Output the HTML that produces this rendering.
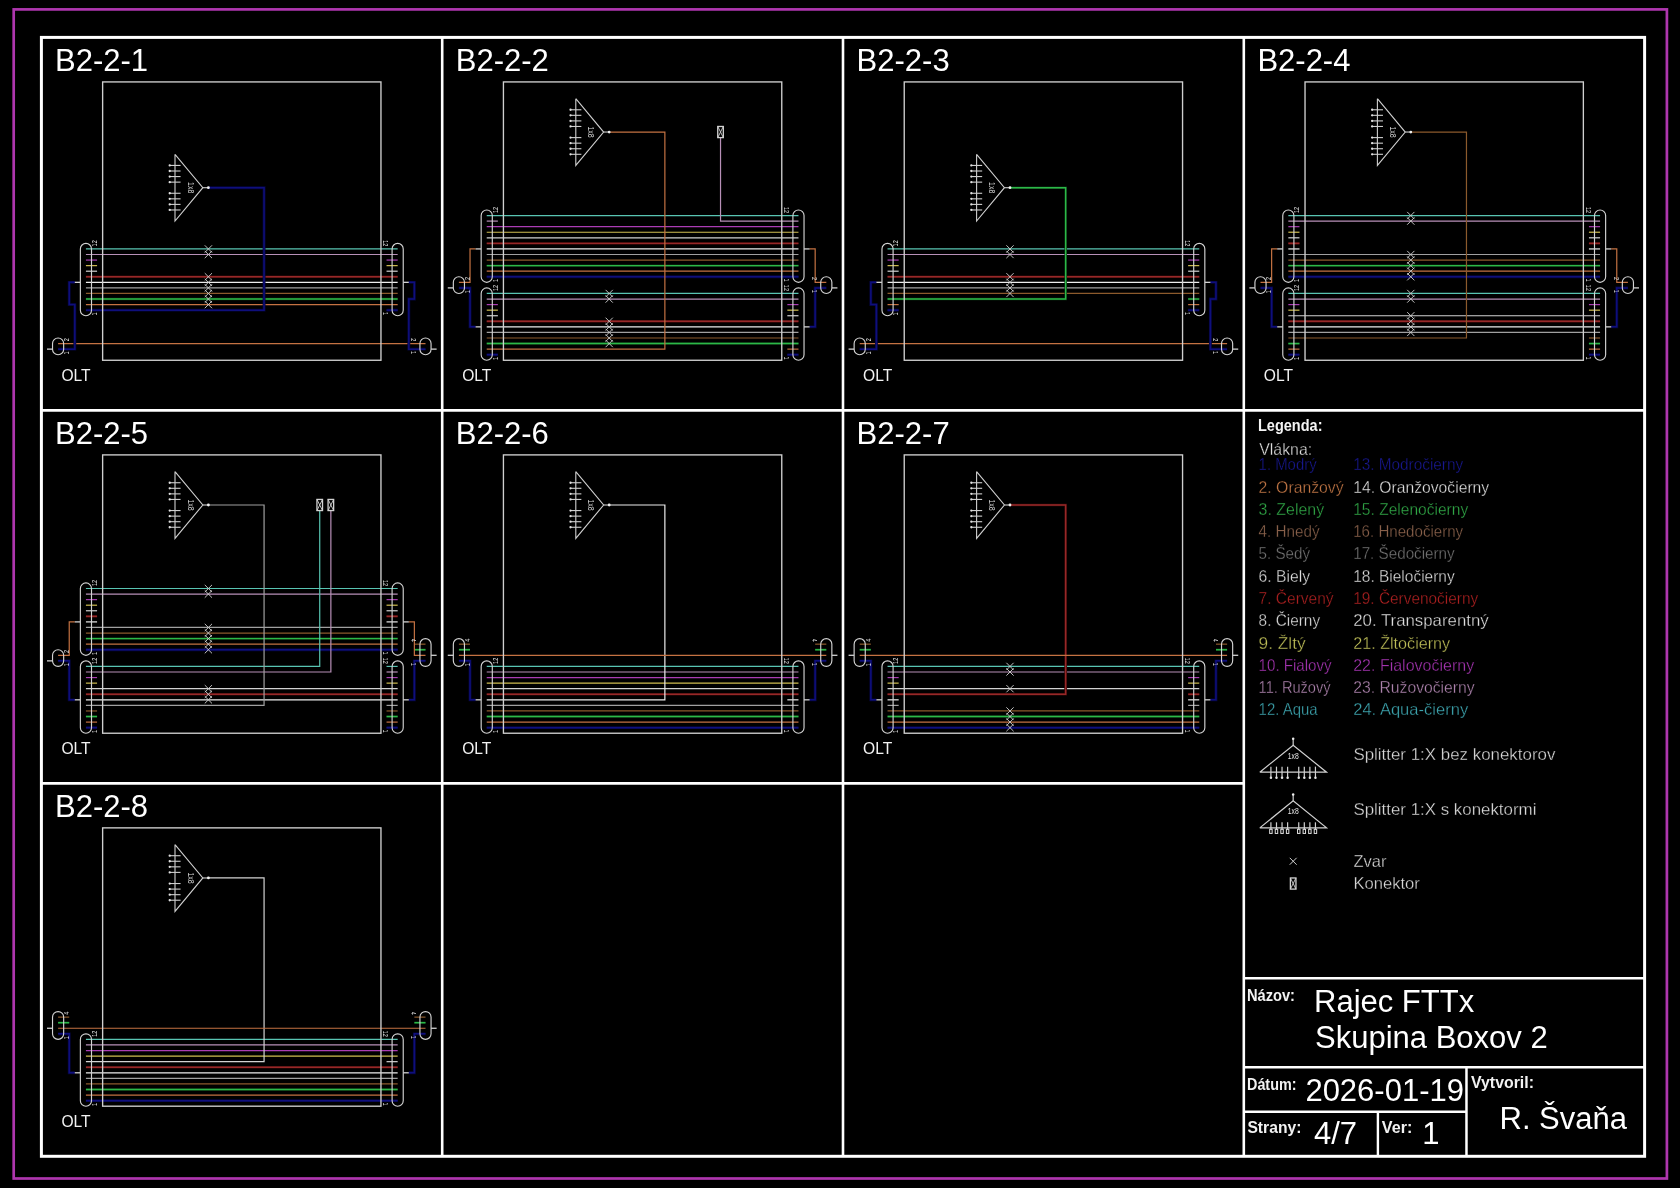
<!DOCTYPE html>
<html lang="sk"><head><meta charset="utf-8"><title>Rajec FTTx - Skupina Boxov 2</title>
<style>
html,body{margin:0;padding:0;background:#000;}
body{width:1680px;height:1188px;overflow:hidden;}
svg{display:block;will-change:transform;}
text{font-family:"Liberation Sans",sans-serif;}
.t{font-size:31px;fill:#fff;}
.o{font-size:15.6px;fill:#f2f2f2;}
.v{font-size:31px;fill:#fff;}
.k{font-size:16.9px;fill:#f2f2f2;font-weight:bold;}
.l{font-size:16.5px;stroke:#000;stroke-width:0.3px;}
.lb{font-size:16.8px;font-weight:bold;}
.n{font-family:"Liberation Sans",sans-serif;}
</style></head><body>
<svg width="1680" height="1188" viewBox="0 0 1680 1188">
<rect width="1680" height="1188" fill="#000"/>
<g>
<polyline points="175,154.3 175,221.1 202.83,187.7 175,154.3" stroke="#cfcfcf" stroke-width="1.1" fill="none" stroke-linejoin="miter"/>
<line x1="202.83" y1="187.7" x2="208.4" y2="187.7" stroke="#cfcfcf" stroke-width="1.1"/>
<line x1="169.43" y1="182.13" x2="180.57" y2="182.13" stroke="#cfcfcf" stroke-width="1.1"/>
<circle cx="169.71" cy="182.13" r="1.15" fill="#e0e0e0"/>
<line x1="169.43" y1="193.27" x2="180.57" y2="193.27" stroke="#cfcfcf" stroke-width="1.1"/>
<circle cx="169.71" cy="193.27" r="1.15" fill="#e0e0e0"/>
<line x1="169.43" y1="176.57" x2="180.57" y2="176.57" stroke="#cfcfcf" stroke-width="1.1"/>
<circle cx="169.71" cy="176.57" r="1.15" fill="#e0e0e0"/>
<line x1="169.43" y1="198.83" x2="180.57" y2="198.83" stroke="#cfcfcf" stroke-width="1.1"/>
<circle cx="169.71" cy="198.83" r="1.15" fill="#e0e0e0"/>
<line x1="169.43" y1="171" x2="180.57" y2="171" stroke="#cfcfcf" stroke-width="1.1"/>
<circle cx="169.71" cy="171" r="1.15" fill="#e0e0e0"/>
<line x1="169.43" y1="204.4" x2="180.57" y2="204.4" stroke="#cfcfcf" stroke-width="1.1"/>
<circle cx="169.71" cy="204.4" r="1.15" fill="#e0e0e0"/>
<line x1="169.43" y1="165.43" x2="180.57" y2="165.43" stroke="#cfcfcf" stroke-width="1.1"/>
<circle cx="169.71" cy="165.43" r="1.15" fill="#e0e0e0"/>
<line x1="169.43" y1="209.97" x2="180.57" y2="209.97" stroke="#cfcfcf" stroke-width="1.1"/>
<circle cx="169.71" cy="209.97" r="1.15" fill="#e0e0e0"/>
<text transform="translate(187.69 187.7) rotate(90) scale(0.77 1)" font-size="9" fill="#dcdcdc" text-anchor="middle">1x8</text>
<line x1="85.93" y1="271.2" x2="97.07" y2="271.2" stroke="#d2d2d2" stroke-width="1.2"/>
<line x1="85.93" y1="265.63" x2="97.07" y2="265.63" stroke="#d0be50" stroke-width="1.2"/>
<line x1="85.93" y1="260.07" x2="97.07" y2="260.07" stroke="#aa3cb4" stroke-width="1.2"/>
<line x1="386.53" y1="310.17" x2="397.67" y2="310.17" stroke="#05053c" stroke-width="2.9"/>
<line x1="386.53" y1="310.17" x2="397.67" y2="310.17" stroke="#0f0f7c" stroke-width="1.5"/>
<line x1="386.53" y1="271.2" x2="397.67" y2="271.2" stroke="#d2d2d2" stroke-width="1.2"/>
<line x1="386.53" y1="265.63" x2="397.67" y2="265.63" stroke="#d0be50" stroke-width="1.2"/>
<line x1="386.53" y1="260.07" x2="397.67" y2="260.07" stroke="#aa3cb4" stroke-width="1.2"/>
<line x1="85.93" y1="248.93" x2="397.67" y2="248.93" stroke="#58c4b2" stroke-width="1.2"/>
<line x1="85.93" y1="254.5" x2="397.67" y2="254.5" stroke="#b890b8" stroke-width="1.2"/>
<line x1="85.93" y1="276.77" x2="397.67" y2="276.77" stroke="#380808" stroke-width="2.7"/>
<line x1="85.93" y1="276.77" x2="397.67" y2="276.77" stroke="#962828" stroke-width="1.45"/>
<line x1="85.93" y1="282.33" x2="397.67" y2="282.33" stroke="#ececec" stroke-width="1.2"/>
<line x1="85.93" y1="287.9" x2="397.67" y2="287.9" stroke="#a0a0a0" stroke-width="1.2"/>
<line x1="85.93" y1="293.47" x2="397.67" y2="293.47" stroke="#8c5a2c" stroke-width="1.2"/>
<line x1="85.93" y1="299.03" x2="397.67" y2="299.03" stroke="#0a3512" stroke-width="2.5"/>
<line x1="85.93" y1="299.03" x2="397.67" y2="299.03" stroke="#2cb848" stroke-width="1.4"/>
<line x1="85.93" y1="304.6" x2="397.67" y2="304.6" stroke="#c47242" stroke-width="1.2"/>
<polyline points="85.93,310.17 264.07,310.17 264.07,187.7 208.4,187.7" stroke="#05053c" stroke-width="2.9" fill="none"/>
<polyline points="85.93,310.17 264.07,310.17 264.07,187.7 208.4,187.7" stroke="#0f0f7c" stroke-width="1.5" fill="none"/>
<polyline points="58.1,343.57 425.5,343.57" stroke="#c47242" stroke-width="1.2" fill="none"/>
<polyline points="58.1,349.13 74.8,349.13 74.8,304.6 69.23,304.6 69.23,282.33 74.8,282.33" stroke="#05053c" stroke-width="2.9" fill="none"/>
<polyline points="58.1,349.13 74.8,349.13 74.8,304.6 69.23,304.6 69.23,282.33 74.8,282.33" stroke="#0f0f7c" stroke-width="1.5" fill="none"/>
<polyline points="425.5,349.13 408.8,349.13 408.8,299.03 414.37,299.03 414.37,282.33 408.8,282.33" stroke="#05053c" stroke-width="2.9" fill="none"/>
<polyline points="425.5,349.13 408.8,349.13 408.8,299.03 414.37,299.03 414.37,282.33 408.8,282.33" stroke="#0f0f7c" stroke-width="1.5" fill="none"/>
<rect x="102.63" y="81.93" width="278.33" height="278.33" stroke="#d0d0d0" stroke-width="1.35" fill="none"/>
<line x1="204.78" y1="245.31" x2="212.02" y2="252.55" stroke="#cacaca" stroke-width="0.95"/>
<line x1="204.78" y1="252.55" x2="212.02" y2="245.31" stroke="#cacaca" stroke-width="0.95"/>
<line x1="204.78" y1="250.88" x2="212.02" y2="258.12" stroke="#cacaca" stroke-width="0.95"/>
<line x1="204.78" y1="258.12" x2="212.02" y2="250.88" stroke="#cacaca" stroke-width="0.95"/>
<line x1="204.78" y1="273.15" x2="212.02" y2="280.38" stroke="#cacaca" stroke-width="0.95"/>
<line x1="204.78" y1="280.38" x2="212.02" y2="273.15" stroke="#cacaca" stroke-width="0.95"/>
<line x1="204.78" y1="278.71" x2="212.02" y2="285.95" stroke="#cacaca" stroke-width="0.95"/>
<line x1="204.78" y1="285.95" x2="212.02" y2="278.71" stroke="#cacaca" stroke-width="0.95"/>
<line x1="204.78" y1="284.28" x2="212.02" y2="291.52" stroke="#cacaca" stroke-width="0.95"/>
<line x1="204.78" y1="291.52" x2="212.02" y2="284.28" stroke="#cacaca" stroke-width="0.95"/>
<line x1="204.78" y1="289.85" x2="212.02" y2="297.08" stroke="#cacaca" stroke-width="0.95"/>
<line x1="204.78" y1="297.08" x2="212.02" y2="289.85" stroke="#cacaca" stroke-width="0.95"/>
<line x1="204.78" y1="295.41" x2="212.02" y2="302.65" stroke="#cacaca" stroke-width="0.95"/>
<line x1="204.78" y1="302.65" x2="212.02" y2="295.41" stroke="#cacaca" stroke-width="0.95"/>
<line x1="204.78" y1="300.98" x2="212.02" y2="308.22" stroke="#cacaca" stroke-width="0.95"/>
<line x1="204.78" y1="308.22" x2="212.02" y2="300.98" stroke="#cacaca" stroke-width="0.95"/>
<rect x="80.37" y="243.37" width="11.13" height="72.37" rx="5.57" ry="5.57" stroke="#d2d2d2" stroke-width="1.15" fill="none"/>
<line x1="74.8" y1="282.33" x2="80.37" y2="282.33" stroke="#d2d2d2" stroke-width="1.3"/>
<text transform="translate(96.79 243.37) rotate(-90) scale(0.74 1)" font-size="7.4" fill="#f4f4f4" text-anchor="middle">12</text>
<text transform="translate(96.79 313.95) rotate(-90) scale(0.74 1)" font-size="7.4" fill="#f4f4f4" text-anchor="middle">1</text>
<rect x="392.1" y="243.37" width="11.13" height="72.37" rx="5.57" ry="5.57" stroke="#d2d2d2" stroke-width="1.15" fill="none"/>
<line x1="403.23" y1="282.33" x2="408.8" y2="282.33" stroke="#d2d2d2" stroke-width="1.3"/>
<text transform="translate(383.47 243.37) rotate(90) scale(0.74 1)" font-size="7.4" fill="#f4f4f4" text-anchor="middle">12</text>
<text transform="translate(383.47 313.51) rotate(90) scale(0.74 1)" font-size="7.4" fill="#f4f4f4" text-anchor="middle">1</text>
<rect x="52.53" y="338" width="11.13" height="16.7" rx="5.57" ry="5.57" stroke="#d2d2d2" stroke-width="1.15" fill="none"/>
<line x1="46.97" y1="349.13" x2="52.53" y2="349.13" stroke="#d2d2d2" stroke-width="1.3"/>
<text transform="translate(68.95 339.67) rotate(-90) scale(0.74 1)" font-size="7.4" fill="#f4f4f4" text-anchor="middle">2</text>
<text transform="translate(68.95 352.92) rotate(-90) scale(0.74 1)" font-size="7.4" fill="#f4f4f4" text-anchor="middle">1</text>
<rect x="419.93" y="338" width="11.13" height="16.7" rx="5.57" ry="5.57" stroke="#d2d2d2" stroke-width="1.15" fill="none"/>
<line x1="431.07" y1="349.13" x2="436.63" y2="349.13" stroke="#d2d2d2" stroke-width="1.3"/>
<text transform="translate(411.3 339.67) rotate(90) scale(0.74 1)" font-size="7.4" fill="#f4f4f4" text-anchor="middle">2</text>
<text transform="translate(411.3 352.47) rotate(90) scale(0.74 1)" font-size="7.4" fill="#f4f4f4" text-anchor="middle">1</text>
<circle cx="208.4" cy="187.7" r="1.4" fill="#f0f0f0"/>
<text x="55" y="70.8" class="t">B2-2-1</text>
<text x="61.4" y="381.1" class="o">OLT</text>
</g>
<g>
<polyline points="575.8,98.63 575.8,165.43 603.63,132.03 575.8,98.63" stroke="#cfcfcf" stroke-width="1.1" fill="none" stroke-linejoin="miter"/>
<line x1="603.63" y1="132.03" x2="609.2" y2="132.03" stroke="#cfcfcf" stroke-width="1.1"/>
<line x1="570.23" y1="126.47" x2="581.37" y2="126.47" stroke="#cfcfcf" stroke-width="1.1"/>
<circle cx="570.51" cy="126.47" r="1.15" fill="#e0e0e0"/>
<line x1="570.23" y1="137.6" x2="581.37" y2="137.6" stroke="#cfcfcf" stroke-width="1.1"/>
<circle cx="570.51" cy="137.6" r="1.15" fill="#e0e0e0"/>
<line x1="570.23" y1="120.9" x2="581.37" y2="120.9" stroke="#cfcfcf" stroke-width="1.1"/>
<circle cx="570.51" cy="120.9" r="1.15" fill="#e0e0e0"/>
<line x1="570.23" y1="143.17" x2="581.37" y2="143.17" stroke="#cfcfcf" stroke-width="1.1"/>
<circle cx="570.51" cy="143.17" r="1.15" fill="#e0e0e0"/>
<line x1="570.23" y1="115.33" x2="581.37" y2="115.33" stroke="#cfcfcf" stroke-width="1.1"/>
<circle cx="570.51" cy="115.33" r="1.15" fill="#e0e0e0"/>
<line x1="570.23" y1="148.73" x2="581.37" y2="148.73" stroke="#cfcfcf" stroke-width="1.1"/>
<circle cx="570.51" cy="148.73" r="1.15" fill="#e0e0e0"/>
<line x1="570.23" y1="109.77" x2="581.37" y2="109.77" stroke="#cfcfcf" stroke-width="1.1"/>
<circle cx="570.51" cy="109.77" r="1.15" fill="#e0e0e0"/>
<line x1="570.23" y1="154.3" x2="581.37" y2="154.3" stroke="#cfcfcf" stroke-width="1.1"/>
<circle cx="570.51" cy="154.3" r="1.15" fill="#e0e0e0"/>
<text transform="translate(588.49 132.03) rotate(90) scale(0.77 1)" font-size="9" fill="#dcdcdc" text-anchor="middle">1x8</text>
<line x1="486.73" y1="221.1" x2="497.87" y2="221.1" stroke="#b890b8" stroke-width="1.2"/>
<line x1="486.73" y1="354.7" x2="497.87" y2="354.7" stroke="#05053c" stroke-width="2.9"/>
<line x1="486.73" y1="354.7" x2="497.87" y2="354.7" stroke="#0f0f7c" stroke-width="1.5"/>
<line x1="486.73" y1="315.73" x2="497.87" y2="315.73" stroke="#d2d2d2" stroke-width="1.2"/>
<line x1="486.73" y1="310.17" x2="497.87" y2="310.17" stroke="#d0be50" stroke-width="1.2"/>
<line x1="486.73" y1="304.6" x2="497.87" y2="304.6" stroke="#aa3cb4" stroke-width="1.2"/>
<line x1="787.33" y1="354.7" x2="798.47" y2="354.7" stroke="#05053c" stroke-width="2.9"/>
<line x1="787.33" y1="354.7" x2="798.47" y2="354.7" stroke="#0f0f7c" stroke-width="1.5"/>
<line x1="787.33" y1="349.13" x2="798.47" y2="349.13" stroke="#c47242" stroke-width="1.2"/>
<line x1="787.33" y1="315.73" x2="798.47" y2="315.73" stroke="#d2d2d2" stroke-width="1.2"/>
<line x1="787.33" y1="310.17" x2="798.47" y2="310.17" stroke="#d0be50" stroke-width="1.2"/>
<line x1="787.33" y1="304.6" x2="798.47" y2="304.6" stroke="#aa3cb4" stroke-width="1.2"/>
<line x1="486.73" y1="215.53" x2="798.47" y2="215.53" stroke="#58c4b2" stroke-width="1.2"/>
<line x1="486.73" y1="226.67" x2="798.47" y2="226.67" stroke="#aa3cb4" stroke-width="1.2"/>
<line x1="486.73" y1="232.23" x2="798.47" y2="232.23" stroke="#d0be50" stroke-width="1.2"/>
<line x1="486.73" y1="237.8" x2="798.47" y2="237.8" stroke="#d2d2d2" stroke-width="1.2"/>
<line x1="486.73" y1="243.37" x2="798.47" y2="243.37" stroke="#380808" stroke-width="2.7"/>
<line x1="486.73" y1="243.37" x2="798.47" y2="243.37" stroke="#962828" stroke-width="1.45"/>
<line x1="486.73" y1="248.93" x2="798.47" y2="248.93" stroke="#ececec" stroke-width="1.2"/>
<line x1="486.73" y1="254.5" x2="798.47" y2="254.5" stroke="#a0a0a0" stroke-width="1.2"/>
<line x1="486.73" y1="260.07" x2="798.47" y2="260.07" stroke="#8c5a2c" stroke-width="1.2"/>
<line x1="486.73" y1="265.63" x2="798.47" y2="265.63" stroke="#0a3512" stroke-width="2.5"/>
<line x1="486.73" y1="265.63" x2="798.47" y2="265.63" stroke="#2cb848" stroke-width="1.4"/>
<line x1="486.73" y1="271.2" x2="798.47" y2="271.2" stroke="#c47242" stroke-width="1.2"/>
<line x1="486.73" y1="276.77" x2="798.47" y2="276.77" stroke="#05053c" stroke-width="2.9"/>
<line x1="486.73" y1="276.77" x2="798.47" y2="276.77" stroke="#0f0f7c" stroke-width="1.5"/>
<polyline points="798.47,221.1 720.53,221.1 720.53,137.6" stroke="#b890b8" stroke-width="1.2" fill="none"/>
<line x1="486.73" y1="293.47" x2="798.47" y2="293.47" stroke="#58c4b2" stroke-width="1.2"/>
<line x1="486.73" y1="299.03" x2="798.47" y2="299.03" stroke="#b890b8" stroke-width="1.2"/>
<line x1="486.73" y1="321.3" x2="798.47" y2="321.3" stroke="#380808" stroke-width="2.7"/>
<line x1="486.73" y1="321.3" x2="798.47" y2="321.3" stroke="#962828" stroke-width="1.45"/>
<line x1="486.73" y1="326.87" x2="798.47" y2="326.87" stroke="#ececec" stroke-width="1.2"/>
<line x1="486.73" y1="332.43" x2="798.47" y2="332.43" stroke="#a0a0a0" stroke-width="1.2"/>
<line x1="486.73" y1="338" x2="798.47" y2="338" stroke="#8c5a2c" stroke-width="1.2"/>
<line x1="486.73" y1="343.57" x2="798.47" y2="343.57" stroke="#0a3512" stroke-width="2.5"/>
<line x1="486.73" y1="343.57" x2="798.47" y2="343.57" stroke="#2cb848" stroke-width="1.4"/>
<polyline points="486.73,349.13 664.87,349.13 664.87,132.03 609.2,132.03" stroke="#c47242" stroke-width="1.2" fill="none"/>
<polyline points="458.9,282.33 470.03,282.33 470.03,248.93 475.6,248.93" stroke="#c47242" stroke-width="1.2" fill="none"/>
<polyline points="458.9,287.9 470.03,287.9 470.03,326.87 475.6,326.87" stroke="#05053c" stroke-width="2.9" fill="none"/>
<polyline points="458.9,287.9 470.03,287.9 470.03,326.87 475.6,326.87" stroke="#0f0f7c" stroke-width="1.5" fill="none"/>
<polyline points="826.3,282.33 815.17,282.33 815.17,248.93 809.6,248.93" stroke="#c47242" stroke-width="1.2" fill="none"/>
<polyline points="826.3,287.9 815.17,287.9 815.17,326.87 809.6,326.87" stroke="#05053c" stroke-width="2.9" fill="none"/>
<polyline points="826.3,287.9 815.17,287.9 815.17,326.87 809.6,326.87" stroke="#0f0f7c" stroke-width="1.5" fill="none"/>
<rect x="503.43" y="81.93" width="278.33" height="278.33" stroke="#d0d0d0" stroke-width="1.35" fill="none"/>
<line x1="605.58" y1="289.85" x2="612.82" y2="297.08" stroke="#cacaca" stroke-width="0.95"/>
<line x1="605.58" y1="297.08" x2="612.82" y2="289.85" stroke="#cacaca" stroke-width="0.95"/>
<line x1="605.58" y1="295.41" x2="612.82" y2="302.65" stroke="#cacaca" stroke-width="0.95"/>
<line x1="605.58" y1="302.65" x2="612.82" y2="295.41" stroke="#cacaca" stroke-width="0.95"/>
<line x1="605.58" y1="317.68" x2="612.82" y2="324.92" stroke="#cacaca" stroke-width="0.95"/>
<line x1="605.58" y1="324.92" x2="612.82" y2="317.68" stroke="#cacaca" stroke-width="0.95"/>
<line x1="605.58" y1="323.25" x2="612.82" y2="330.48" stroke="#cacaca" stroke-width="0.95"/>
<line x1="605.58" y1="330.48" x2="612.82" y2="323.25" stroke="#cacaca" stroke-width="0.95"/>
<line x1="605.58" y1="328.81" x2="612.82" y2="336.05" stroke="#cacaca" stroke-width="0.95"/>
<line x1="605.58" y1="336.05" x2="612.82" y2="328.81" stroke="#cacaca" stroke-width="0.95"/>
<line x1="605.58" y1="334.38" x2="612.82" y2="341.62" stroke="#cacaca" stroke-width="0.95"/>
<line x1="605.58" y1="341.62" x2="612.82" y2="334.38" stroke="#cacaca" stroke-width="0.95"/>
<line x1="605.58" y1="339.95" x2="612.82" y2="347.18" stroke="#cacaca" stroke-width="0.95"/>
<line x1="605.58" y1="347.18" x2="612.82" y2="339.95" stroke="#cacaca" stroke-width="0.95"/>
<rect x="717.75" y="126.47" width="5.57" height="11.13" stroke="#d2d2d2" stroke-width="1.3" fill="none"/>
<line x1="717.75" y1="126.47" x2="723.32" y2="137.6" stroke="#d2d2d2" stroke-width="0.9"/>
<line x1="717.75" y1="137.6" x2="723.32" y2="126.47" stroke="#d2d2d2" stroke-width="0.9"/>
<rect x="481.17" y="209.97" width="11.13" height="72.37" rx="5.57" ry="5.57" stroke="#d2d2d2" stroke-width="1.15" fill="none"/>
<line x1="475.6" y1="248.93" x2="481.17" y2="248.93" stroke="#d2d2d2" stroke-width="1.3"/>
<text transform="translate(497.59 209.97) rotate(-90) scale(0.74 1)" font-size="7.4" fill="#f4f4f4" text-anchor="middle">12</text>
<text transform="translate(497.59 280.55) rotate(-90) scale(0.74 1)" font-size="7.4" fill="#f4f4f4" text-anchor="middle">1</text>
<rect x="792.9" y="209.97" width="11.13" height="72.37" rx="5.57" ry="5.57" stroke="#d2d2d2" stroke-width="1.15" fill="none"/>
<line x1="804.03" y1="248.93" x2="809.6" y2="248.93" stroke="#d2d2d2" stroke-width="1.3"/>
<text transform="translate(784.27 209.97) rotate(90) scale(0.74 1)" font-size="7.4" fill="#f4f4f4" text-anchor="middle">12</text>
<text transform="translate(784.27 280.11) rotate(90) scale(0.74 1)" font-size="7.4" fill="#f4f4f4" text-anchor="middle">1</text>
<rect x="481.17" y="287.9" width="11.13" height="72.37" rx="5.57" ry="5.57" stroke="#d2d2d2" stroke-width="1.15" fill="none"/>
<line x1="475.6" y1="326.87" x2="481.17" y2="326.87" stroke="#d2d2d2" stroke-width="1.3"/>
<text transform="translate(497.59 287.9) rotate(-90) scale(0.74 1)" font-size="7.4" fill="#f4f4f4" text-anchor="middle">12</text>
<text transform="translate(497.59 358.49) rotate(-90) scale(0.74 1)" font-size="7.4" fill="#f4f4f4" text-anchor="middle">1</text>
<rect x="792.9" y="287.9" width="11.13" height="72.37" rx="5.57" ry="5.57" stroke="#d2d2d2" stroke-width="1.15" fill="none"/>
<line x1="804.03" y1="326.87" x2="809.6" y2="326.87" stroke="#d2d2d2" stroke-width="1.3"/>
<text transform="translate(784.27 287.9) rotate(90) scale(0.74 1)" font-size="7.4" fill="#f4f4f4" text-anchor="middle">12</text>
<text transform="translate(784.27 358.04) rotate(90) scale(0.74 1)" font-size="7.4" fill="#f4f4f4" text-anchor="middle">1</text>
<rect x="453.33" y="276.77" width="11.13" height="16.7" rx="5.57" ry="5.57" stroke="#d2d2d2" stroke-width="1.15" fill="none"/>
<line x1="447.77" y1="287.9" x2="453.33" y2="287.9" stroke="#d2d2d2" stroke-width="1.3"/>
<text transform="translate(469.75 278.44) rotate(-90) scale(0.74 1)" font-size="7.4" fill="#f4f4f4" text-anchor="middle">2</text>
<text transform="translate(469.75 291.69) rotate(-90) scale(0.74 1)" font-size="7.4" fill="#f4f4f4" text-anchor="middle">1</text>
<rect x="820.73" y="276.77" width="11.13" height="16.7" rx="5.57" ry="5.57" stroke="#d2d2d2" stroke-width="1.15" fill="none"/>
<line x1="831.87" y1="287.9" x2="837.43" y2="287.9" stroke="#d2d2d2" stroke-width="1.3"/>
<text transform="translate(812.1 278.44) rotate(90) scale(0.74 1)" font-size="7.4" fill="#f4f4f4" text-anchor="middle">2</text>
<text transform="translate(812.1 291.24) rotate(90) scale(0.74 1)" font-size="7.4" fill="#f4f4f4" text-anchor="middle">1</text>
<circle cx="609.2" cy="132.03" r="1.4" fill="#f0f0f0"/>
<text x="455.8" y="70.8" class="t">B2-2-2</text>
<text x="462.2" y="381.1" class="o">OLT</text>
</g>
<g>
<polyline points="976.6,154.3 976.6,221.1 1004.43,187.7 976.6,154.3" stroke="#cfcfcf" stroke-width="1.1" fill="none" stroke-linejoin="miter"/>
<line x1="1004.43" y1="187.7" x2="1010" y2="187.7" stroke="#cfcfcf" stroke-width="1.1"/>
<line x1="971.03" y1="182.13" x2="982.17" y2="182.13" stroke="#cfcfcf" stroke-width="1.1"/>
<circle cx="971.31" cy="182.13" r="1.15" fill="#e0e0e0"/>
<line x1="971.03" y1="193.27" x2="982.17" y2="193.27" stroke="#cfcfcf" stroke-width="1.1"/>
<circle cx="971.31" cy="193.27" r="1.15" fill="#e0e0e0"/>
<line x1="971.03" y1="176.57" x2="982.17" y2="176.57" stroke="#cfcfcf" stroke-width="1.1"/>
<circle cx="971.31" cy="176.57" r="1.15" fill="#e0e0e0"/>
<line x1="971.03" y1="198.83" x2="982.17" y2="198.83" stroke="#cfcfcf" stroke-width="1.1"/>
<circle cx="971.31" cy="198.83" r="1.15" fill="#e0e0e0"/>
<line x1="971.03" y1="171" x2="982.17" y2="171" stroke="#cfcfcf" stroke-width="1.1"/>
<circle cx="971.31" cy="171" r="1.15" fill="#e0e0e0"/>
<line x1="971.03" y1="204.4" x2="982.17" y2="204.4" stroke="#cfcfcf" stroke-width="1.1"/>
<circle cx="971.31" cy="204.4" r="1.15" fill="#e0e0e0"/>
<line x1="971.03" y1="165.43" x2="982.17" y2="165.43" stroke="#cfcfcf" stroke-width="1.1"/>
<circle cx="971.31" cy="165.43" r="1.15" fill="#e0e0e0"/>
<line x1="971.03" y1="209.97" x2="982.17" y2="209.97" stroke="#cfcfcf" stroke-width="1.1"/>
<circle cx="971.31" cy="209.97" r="1.15" fill="#e0e0e0"/>
<text transform="translate(989.29 187.7) rotate(90) scale(0.77 1)" font-size="9" fill="#dcdcdc" text-anchor="middle">1x8</text>
<line x1="887.53" y1="310.17" x2="898.67" y2="310.17" stroke="#05053c" stroke-width="2.9"/>
<line x1="887.53" y1="310.17" x2="898.67" y2="310.17" stroke="#0f0f7c" stroke-width="1.5"/>
<line x1="887.53" y1="304.6" x2="898.67" y2="304.6" stroke="#c47242" stroke-width="1.2"/>
<line x1="887.53" y1="271.2" x2="898.67" y2="271.2" stroke="#d2d2d2" stroke-width="1.2"/>
<line x1="887.53" y1="265.63" x2="898.67" y2="265.63" stroke="#d0be50" stroke-width="1.2"/>
<line x1="887.53" y1="260.07" x2="898.67" y2="260.07" stroke="#aa3cb4" stroke-width="1.2"/>
<line x1="1188.13" y1="310.17" x2="1199.27" y2="310.17" stroke="#05053c" stroke-width="2.9"/>
<line x1="1188.13" y1="310.17" x2="1199.27" y2="310.17" stroke="#0f0f7c" stroke-width="1.5"/>
<line x1="1188.13" y1="304.6" x2="1199.27" y2="304.6" stroke="#c47242" stroke-width="1.2"/>
<line x1="1188.13" y1="299.03" x2="1199.27" y2="299.03" stroke="#0a3512" stroke-width="2.5"/>
<line x1="1188.13" y1="299.03" x2="1199.27" y2="299.03" stroke="#2cb848" stroke-width="1.4"/>
<line x1="1188.13" y1="271.2" x2="1199.27" y2="271.2" stroke="#d2d2d2" stroke-width="1.2"/>
<line x1="1188.13" y1="265.63" x2="1199.27" y2="265.63" stroke="#d0be50" stroke-width="1.2"/>
<line x1="1188.13" y1="260.07" x2="1199.27" y2="260.07" stroke="#aa3cb4" stroke-width="1.2"/>
<line x1="887.53" y1="248.93" x2="1199.27" y2="248.93" stroke="#58c4b2" stroke-width="1.2"/>
<line x1="887.53" y1="254.5" x2="1199.27" y2="254.5" stroke="#b890b8" stroke-width="1.2"/>
<line x1="887.53" y1="276.77" x2="1199.27" y2="276.77" stroke="#380808" stroke-width="2.7"/>
<line x1="887.53" y1="276.77" x2="1199.27" y2="276.77" stroke="#962828" stroke-width="1.45"/>
<line x1="887.53" y1="282.33" x2="1199.27" y2="282.33" stroke="#ececec" stroke-width="1.2"/>
<line x1="887.53" y1="287.9" x2="1199.27" y2="287.9" stroke="#a0a0a0" stroke-width="1.2"/>
<line x1="887.53" y1="293.47" x2="1199.27" y2="293.47" stroke="#8c5a2c" stroke-width="1.2"/>
<polyline points="887.53,299.03 1065.67,299.03 1065.67,187.7 1010,187.7" stroke="#0a3512" stroke-width="2.5" fill="none"/>
<polyline points="887.53,299.03 1065.67,299.03 1065.67,187.7 1010,187.7" stroke="#2cb848" stroke-width="1.4" fill="none"/>
<polyline points="859.7,343.57 1227.1,343.57" stroke="#c47242" stroke-width="1.2" fill="none"/>
<polyline points="859.7,349.13 876.4,349.13 876.4,304.6 870.83,304.6 870.83,282.33 876.4,282.33" stroke="#05053c" stroke-width="2.9" fill="none"/>
<polyline points="859.7,349.13 876.4,349.13 876.4,304.6 870.83,304.6 870.83,282.33 876.4,282.33" stroke="#0f0f7c" stroke-width="1.5" fill="none"/>
<polyline points="1227.1,349.13 1210.4,349.13 1210.4,299.03 1215.97,299.03 1215.97,282.33 1210.4,282.33" stroke="#05053c" stroke-width="2.9" fill="none"/>
<polyline points="1227.1,349.13 1210.4,349.13 1210.4,299.03 1215.97,299.03 1215.97,282.33 1210.4,282.33" stroke="#0f0f7c" stroke-width="1.5" fill="none"/>
<rect x="904.23" y="81.93" width="278.33" height="278.33" stroke="#d0d0d0" stroke-width="1.35" fill="none"/>
<line x1="1006.38" y1="245.31" x2="1013.62" y2="252.55" stroke="#cacaca" stroke-width="0.95"/>
<line x1="1006.38" y1="252.55" x2="1013.62" y2="245.31" stroke="#cacaca" stroke-width="0.95"/>
<line x1="1006.38" y1="250.88" x2="1013.62" y2="258.12" stroke="#cacaca" stroke-width="0.95"/>
<line x1="1006.38" y1="258.12" x2="1013.62" y2="250.88" stroke="#cacaca" stroke-width="0.95"/>
<line x1="1006.38" y1="273.15" x2="1013.62" y2="280.38" stroke="#cacaca" stroke-width="0.95"/>
<line x1="1006.38" y1="280.38" x2="1013.62" y2="273.15" stroke="#cacaca" stroke-width="0.95"/>
<line x1="1006.38" y1="278.71" x2="1013.62" y2="285.95" stroke="#cacaca" stroke-width="0.95"/>
<line x1="1006.38" y1="285.95" x2="1013.62" y2="278.71" stroke="#cacaca" stroke-width="0.95"/>
<line x1="1006.38" y1="284.28" x2="1013.62" y2="291.52" stroke="#cacaca" stroke-width="0.95"/>
<line x1="1006.38" y1="291.52" x2="1013.62" y2="284.28" stroke="#cacaca" stroke-width="0.95"/>
<line x1="1006.38" y1="289.85" x2="1013.62" y2="297.08" stroke="#cacaca" stroke-width="0.95"/>
<line x1="1006.38" y1="297.08" x2="1013.62" y2="289.85" stroke="#cacaca" stroke-width="0.95"/>
<rect x="881.97" y="243.37" width="11.13" height="72.37" rx="5.57" ry="5.57" stroke="#d2d2d2" stroke-width="1.15" fill="none"/>
<line x1="876.4" y1="282.33" x2="881.97" y2="282.33" stroke="#d2d2d2" stroke-width="1.3"/>
<text transform="translate(898.39 243.37) rotate(-90) scale(0.74 1)" font-size="7.4" fill="#f4f4f4" text-anchor="middle">12</text>
<text transform="translate(898.39 313.95) rotate(-90) scale(0.74 1)" font-size="7.4" fill="#f4f4f4" text-anchor="middle">1</text>
<rect x="1193.7" y="243.37" width="11.13" height="72.37" rx="5.57" ry="5.57" stroke="#d2d2d2" stroke-width="1.15" fill="none"/>
<line x1="1204.83" y1="282.33" x2="1210.4" y2="282.33" stroke="#d2d2d2" stroke-width="1.3"/>
<text transform="translate(1185.07 243.37) rotate(90) scale(0.74 1)" font-size="7.4" fill="#f4f4f4" text-anchor="middle">12</text>
<text transform="translate(1185.07 313.51) rotate(90) scale(0.74 1)" font-size="7.4" fill="#f4f4f4" text-anchor="middle">1</text>
<rect x="854.13" y="338" width="11.13" height="16.7" rx="5.57" ry="5.57" stroke="#d2d2d2" stroke-width="1.15" fill="none"/>
<line x1="848.57" y1="349.13" x2="854.13" y2="349.13" stroke="#d2d2d2" stroke-width="1.3"/>
<text transform="translate(870.55 339.67) rotate(-90) scale(0.74 1)" font-size="7.4" fill="#f4f4f4" text-anchor="middle">2</text>
<text transform="translate(870.55 352.92) rotate(-90) scale(0.74 1)" font-size="7.4" fill="#f4f4f4" text-anchor="middle">1</text>
<rect x="1221.53" y="338" width="11.13" height="16.7" rx="5.57" ry="5.57" stroke="#d2d2d2" stroke-width="1.15" fill="none"/>
<line x1="1232.67" y1="349.13" x2="1238.23" y2="349.13" stroke="#d2d2d2" stroke-width="1.3"/>
<text transform="translate(1212.9 339.67) rotate(90) scale(0.74 1)" font-size="7.4" fill="#f4f4f4" text-anchor="middle">2</text>
<text transform="translate(1212.9 352.47) rotate(90) scale(0.74 1)" font-size="7.4" fill="#f4f4f4" text-anchor="middle">1</text>
<circle cx="1010" cy="187.7" r="1.4" fill="#f0f0f0"/>
<text x="856.6" y="70.8" class="t">B2-2-3</text>
<text x="863" y="381.1" class="o">OLT</text>
</g>
<g>
<polyline points="1377.4,98.63 1377.4,165.43 1405.23,132.03 1377.4,98.63" stroke="#cfcfcf" stroke-width="1.1" fill="none" stroke-linejoin="miter"/>
<line x1="1405.23" y1="132.03" x2="1410.8" y2="132.03" stroke="#cfcfcf" stroke-width="1.1"/>
<line x1="1371.83" y1="126.47" x2="1382.97" y2="126.47" stroke="#cfcfcf" stroke-width="1.1"/>
<circle cx="1372.11" cy="126.47" r="1.15" fill="#e0e0e0"/>
<line x1="1371.83" y1="137.6" x2="1382.97" y2="137.6" stroke="#cfcfcf" stroke-width="1.1"/>
<circle cx="1372.11" cy="137.6" r="1.15" fill="#e0e0e0"/>
<line x1="1371.83" y1="120.9" x2="1382.97" y2="120.9" stroke="#cfcfcf" stroke-width="1.1"/>
<circle cx="1372.11" cy="120.9" r="1.15" fill="#e0e0e0"/>
<line x1="1371.83" y1="143.17" x2="1382.97" y2="143.17" stroke="#cfcfcf" stroke-width="1.1"/>
<circle cx="1372.11" cy="143.17" r="1.15" fill="#e0e0e0"/>
<line x1="1371.83" y1="115.33" x2="1382.97" y2="115.33" stroke="#cfcfcf" stroke-width="1.1"/>
<circle cx="1372.11" cy="115.33" r="1.15" fill="#e0e0e0"/>
<line x1="1371.83" y1="148.73" x2="1382.97" y2="148.73" stroke="#cfcfcf" stroke-width="1.1"/>
<circle cx="1372.11" cy="148.73" r="1.15" fill="#e0e0e0"/>
<line x1="1371.83" y1="109.77" x2="1382.97" y2="109.77" stroke="#cfcfcf" stroke-width="1.1"/>
<circle cx="1372.11" cy="109.77" r="1.15" fill="#e0e0e0"/>
<line x1="1371.83" y1="154.3" x2="1382.97" y2="154.3" stroke="#cfcfcf" stroke-width="1.1"/>
<circle cx="1372.11" cy="154.3" r="1.15" fill="#e0e0e0"/>
<text transform="translate(1390.09 132.03) rotate(90) scale(0.77 1)" font-size="9" fill="#dcdcdc" text-anchor="middle">1x8</text>
<line x1="1288.33" y1="248.93" x2="1299.47" y2="248.93" stroke="#ececec" stroke-width="1.2"/>
<line x1="1288.33" y1="243.37" x2="1299.47" y2="243.37" stroke="#380808" stroke-width="2.7"/>
<line x1="1288.33" y1="243.37" x2="1299.47" y2="243.37" stroke="#962828" stroke-width="1.45"/>
<line x1="1288.33" y1="237.8" x2="1299.47" y2="237.8" stroke="#d2d2d2" stroke-width="1.2"/>
<line x1="1288.33" y1="232.23" x2="1299.47" y2="232.23" stroke="#d0be50" stroke-width="1.2"/>
<line x1="1288.33" y1="226.67" x2="1299.47" y2="226.67" stroke="#aa3cb4" stroke-width="1.2"/>
<line x1="1588.93" y1="248.93" x2="1600.07" y2="248.93" stroke="#ececec" stroke-width="1.2"/>
<line x1="1588.93" y1="243.37" x2="1600.07" y2="243.37" stroke="#380808" stroke-width="2.7"/>
<line x1="1588.93" y1="243.37" x2="1600.07" y2="243.37" stroke="#962828" stroke-width="1.45"/>
<line x1="1588.93" y1="237.8" x2="1600.07" y2="237.8" stroke="#d2d2d2" stroke-width="1.2"/>
<line x1="1588.93" y1="232.23" x2="1600.07" y2="232.23" stroke="#d0be50" stroke-width="1.2"/>
<line x1="1588.93" y1="226.67" x2="1600.07" y2="226.67" stroke="#aa3cb4" stroke-width="1.2"/>
<line x1="1288.33" y1="354.7" x2="1299.47" y2="354.7" stroke="#05053c" stroke-width="2.9"/>
<line x1="1288.33" y1="354.7" x2="1299.47" y2="354.7" stroke="#0f0f7c" stroke-width="1.5"/>
<line x1="1288.33" y1="349.13" x2="1299.47" y2="349.13" stroke="#c47242" stroke-width="1.2"/>
<line x1="1288.33" y1="343.57" x2="1299.47" y2="343.57" stroke="#0a3512" stroke-width="2.5"/>
<line x1="1288.33" y1="343.57" x2="1299.47" y2="343.57" stroke="#2cb848" stroke-width="1.4"/>
<line x1="1288.33" y1="310.17" x2="1299.47" y2="310.17" stroke="#d0be50" stroke-width="1.2"/>
<line x1="1288.33" y1="304.6" x2="1299.47" y2="304.6" stroke="#aa3cb4" stroke-width="1.2"/>
<line x1="1588.93" y1="354.7" x2="1600.07" y2="354.7" stroke="#05053c" stroke-width="2.9"/>
<line x1="1588.93" y1="354.7" x2="1600.07" y2="354.7" stroke="#0f0f7c" stroke-width="1.5"/>
<line x1="1588.93" y1="349.13" x2="1600.07" y2="349.13" stroke="#c47242" stroke-width="1.2"/>
<line x1="1588.93" y1="343.57" x2="1600.07" y2="343.57" stroke="#0a3512" stroke-width="2.5"/>
<line x1="1588.93" y1="343.57" x2="1600.07" y2="343.57" stroke="#2cb848" stroke-width="1.4"/>
<line x1="1588.93" y1="338" x2="1600.07" y2="338" stroke="#8c5a2c" stroke-width="1.2"/>
<line x1="1588.93" y1="310.17" x2="1600.07" y2="310.17" stroke="#d0be50" stroke-width="1.2"/>
<line x1="1588.93" y1="304.6" x2="1600.07" y2="304.6" stroke="#aa3cb4" stroke-width="1.2"/>
<line x1="1288.33" y1="215.53" x2="1600.07" y2="215.53" stroke="#58c4b2" stroke-width="1.2"/>
<line x1="1288.33" y1="221.1" x2="1600.07" y2="221.1" stroke="#b890b8" stroke-width="1.2"/>
<line x1="1288.33" y1="254.5" x2="1600.07" y2="254.5" stroke="#a0a0a0" stroke-width="1.2"/>
<line x1="1288.33" y1="260.07" x2="1600.07" y2="260.07" stroke="#8c5a2c" stroke-width="1.2"/>
<line x1="1288.33" y1="265.63" x2="1600.07" y2="265.63" stroke="#0a3512" stroke-width="2.5"/>
<line x1="1288.33" y1="265.63" x2="1600.07" y2="265.63" stroke="#2cb848" stroke-width="1.4"/>
<line x1="1288.33" y1="271.2" x2="1600.07" y2="271.2" stroke="#c47242" stroke-width="1.2"/>
<line x1="1288.33" y1="276.77" x2="1600.07" y2="276.77" stroke="#05053c" stroke-width="2.9"/>
<line x1="1288.33" y1="276.77" x2="1600.07" y2="276.77" stroke="#0f0f7c" stroke-width="1.5"/>
<line x1="1288.33" y1="293.47" x2="1600.07" y2="293.47" stroke="#58c4b2" stroke-width="1.2"/>
<line x1="1288.33" y1="299.03" x2="1600.07" y2="299.03" stroke="#b890b8" stroke-width="1.2"/>
<line x1="1288.33" y1="315.73" x2="1600.07" y2="315.73" stroke="#d2d2d2" stroke-width="1.2"/>
<line x1="1288.33" y1="321.3" x2="1600.07" y2="321.3" stroke="#380808" stroke-width="2.7"/>
<line x1="1288.33" y1="321.3" x2="1600.07" y2="321.3" stroke="#962828" stroke-width="1.45"/>
<line x1="1288.33" y1="326.87" x2="1600.07" y2="326.87" stroke="#ececec" stroke-width="1.2"/>
<line x1="1288.33" y1="332.43" x2="1600.07" y2="332.43" stroke="#a0a0a0" stroke-width="1.2"/>
<polyline points="1288.33,338 1466.47,338 1466.47,132.03 1410.8,132.03" stroke="#8c5a2c" stroke-width="1.2" fill="none"/>
<polyline points="1260.5,282.33 1271.63,282.33 1271.63,248.93 1277.2,248.93" stroke="#c47242" stroke-width="1.2" fill="none"/>
<polyline points="1260.5,287.9 1271.63,287.9 1271.63,326.87 1277.2,326.87" stroke="#05053c" stroke-width="2.9" fill="none"/>
<polyline points="1260.5,287.9 1271.63,287.9 1271.63,326.87 1277.2,326.87" stroke="#0f0f7c" stroke-width="1.5" fill="none"/>
<polyline points="1627.9,282.33 1616.77,282.33 1616.77,248.93 1611.2,248.93" stroke="#c47242" stroke-width="1.2" fill="none"/>
<polyline points="1627.9,287.9 1616.77,287.9 1616.77,326.87 1611.2,326.87" stroke="#05053c" stroke-width="2.9" fill="none"/>
<polyline points="1627.9,287.9 1616.77,287.9 1616.77,326.87 1611.2,326.87" stroke="#0f0f7c" stroke-width="1.5" fill="none"/>
<rect x="1305.03" y="81.93" width="278.33" height="278.33" stroke="#d0d0d0" stroke-width="1.35" fill="none"/>
<line x1="1407.18" y1="211.91" x2="1414.42" y2="219.15" stroke="#cacaca" stroke-width="0.95"/>
<line x1="1407.18" y1="219.15" x2="1414.42" y2="211.91" stroke="#cacaca" stroke-width="0.95"/>
<line x1="1407.18" y1="217.48" x2="1414.42" y2="224.72" stroke="#cacaca" stroke-width="0.95"/>
<line x1="1407.18" y1="224.72" x2="1414.42" y2="217.48" stroke="#cacaca" stroke-width="0.95"/>
<line x1="1407.18" y1="250.88" x2="1414.42" y2="258.12" stroke="#cacaca" stroke-width="0.95"/>
<line x1="1407.18" y1="258.12" x2="1414.42" y2="250.88" stroke="#cacaca" stroke-width="0.95"/>
<line x1="1407.18" y1="256.45" x2="1414.42" y2="263.69" stroke="#cacaca" stroke-width="0.95"/>
<line x1="1407.18" y1="263.69" x2="1414.42" y2="256.45" stroke="#cacaca" stroke-width="0.95"/>
<line x1="1407.18" y1="262.01" x2="1414.42" y2="269.25" stroke="#cacaca" stroke-width="0.95"/>
<line x1="1407.18" y1="269.25" x2="1414.42" y2="262.01" stroke="#cacaca" stroke-width="0.95"/>
<line x1="1407.18" y1="267.58" x2="1414.42" y2="274.82" stroke="#cacaca" stroke-width="0.95"/>
<line x1="1407.18" y1="274.82" x2="1414.42" y2="267.58" stroke="#cacaca" stroke-width="0.95"/>
<line x1="1407.18" y1="273.15" x2="1414.42" y2="280.38" stroke="#cacaca" stroke-width="0.95"/>
<line x1="1407.18" y1="280.38" x2="1414.42" y2="273.15" stroke="#cacaca" stroke-width="0.95"/>
<line x1="1407.18" y1="289.85" x2="1414.42" y2="297.08" stroke="#cacaca" stroke-width="0.95"/>
<line x1="1407.18" y1="297.08" x2="1414.42" y2="289.85" stroke="#cacaca" stroke-width="0.95"/>
<line x1="1407.18" y1="295.41" x2="1414.42" y2="302.65" stroke="#cacaca" stroke-width="0.95"/>
<line x1="1407.18" y1="302.65" x2="1414.42" y2="295.41" stroke="#cacaca" stroke-width="0.95"/>
<line x1="1407.18" y1="312.11" x2="1414.42" y2="319.35" stroke="#cacaca" stroke-width="0.95"/>
<line x1="1407.18" y1="319.35" x2="1414.42" y2="312.11" stroke="#cacaca" stroke-width="0.95"/>
<line x1="1407.18" y1="317.68" x2="1414.42" y2="324.92" stroke="#cacaca" stroke-width="0.95"/>
<line x1="1407.18" y1="324.92" x2="1414.42" y2="317.68" stroke="#cacaca" stroke-width="0.95"/>
<line x1="1407.18" y1="323.25" x2="1414.42" y2="330.48" stroke="#cacaca" stroke-width="0.95"/>
<line x1="1407.18" y1="330.48" x2="1414.42" y2="323.25" stroke="#cacaca" stroke-width="0.95"/>
<line x1="1407.18" y1="328.81" x2="1414.42" y2="336.05" stroke="#cacaca" stroke-width="0.95"/>
<line x1="1407.18" y1="336.05" x2="1414.42" y2="328.81" stroke="#cacaca" stroke-width="0.95"/>
<rect x="1282.77" y="209.97" width="11.13" height="72.37" rx="5.57" ry="5.57" stroke="#d2d2d2" stroke-width="1.15" fill="none"/>
<line x1="1277.2" y1="248.93" x2="1282.77" y2="248.93" stroke="#d2d2d2" stroke-width="1.3"/>
<text transform="translate(1299.19 209.97) rotate(-90) scale(0.74 1)" font-size="7.4" fill="#f4f4f4" text-anchor="middle">12</text>
<text transform="translate(1299.19 280.55) rotate(-90) scale(0.74 1)" font-size="7.4" fill="#f4f4f4" text-anchor="middle">1</text>
<rect x="1594.5" y="209.97" width="11.13" height="72.37" rx="5.57" ry="5.57" stroke="#d2d2d2" stroke-width="1.15" fill="none"/>
<line x1="1605.63" y1="248.93" x2="1611.2" y2="248.93" stroke="#d2d2d2" stroke-width="1.3"/>
<text transform="translate(1585.87 209.97) rotate(90) scale(0.74 1)" font-size="7.4" fill="#f4f4f4" text-anchor="middle">12</text>
<text transform="translate(1585.87 280.11) rotate(90) scale(0.74 1)" font-size="7.4" fill="#f4f4f4" text-anchor="middle">1</text>
<rect x="1282.77" y="287.9" width="11.13" height="72.37" rx="5.57" ry="5.57" stroke="#d2d2d2" stroke-width="1.15" fill="none"/>
<line x1="1277.2" y1="326.87" x2="1282.77" y2="326.87" stroke="#d2d2d2" stroke-width="1.3"/>
<text transform="translate(1299.19 287.9) rotate(-90) scale(0.74 1)" font-size="7.4" fill="#f4f4f4" text-anchor="middle">12</text>
<text transform="translate(1299.19 358.49) rotate(-90) scale(0.74 1)" font-size="7.4" fill="#f4f4f4" text-anchor="middle">1</text>
<rect x="1594.5" y="287.9" width="11.13" height="72.37" rx="5.57" ry="5.57" stroke="#d2d2d2" stroke-width="1.15" fill="none"/>
<line x1="1605.63" y1="326.87" x2="1611.2" y2="326.87" stroke="#d2d2d2" stroke-width="1.3"/>
<text transform="translate(1585.87 287.9) rotate(90) scale(0.74 1)" font-size="7.4" fill="#f4f4f4" text-anchor="middle">12</text>
<text transform="translate(1585.87 358.04) rotate(90) scale(0.74 1)" font-size="7.4" fill="#f4f4f4" text-anchor="middle">1</text>
<rect x="1254.93" y="276.77" width="11.13" height="16.7" rx="5.57" ry="5.57" stroke="#d2d2d2" stroke-width="1.15" fill="none"/>
<line x1="1249.37" y1="287.9" x2="1254.93" y2="287.9" stroke="#d2d2d2" stroke-width="1.3"/>
<text transform="translate(1271.36 278.44) rotate(-90) scale(0.74 1)" font-size="7.4" fill="#f4f4f4" text-anchor="middle">2</text>
<text transform="translate(1271.36 291.69) rotate(-90) scale(0.74 1)" font-size="7.4" fill="#f4f4f4" text-anchor="middle">1</text>
<rect x="1622.33" y="276.77" width="11.13" height="16.7" rx="5.57" ry="5.57" stroke="#d2d2d2" stroke-width="1.15" fill="none"/>
<line x1="1633.47" y1="287.9" x2="1639.03" y2="287.9" stroke="#d2d2d2" stroke-width="1.3"/>
<text transform="translate(1613.7 278.44) rotate(90) scale(0.74 1)" font-size="7.4" fill="#f4f4f4" text-anchor="middle">2</text>
<text transform="translate(1613.7 291.24) rotate(90) scale(0.74 1)" font-size="7.4" fill="#f4f4f4" text-anchor="middle">1</text>
<circle cx="1410.8" cy="132.03" r="1.4" fill="#f0f0f0"/>
<text x="1257.4" y="70.8" class="t">B2-2-4</text>
<text x="1263.8" y="381.1" class="o">OLT</text>
</g>
<g>
<polyline points="175,471.6 175,538.4 202.83,505 175,471.6" stroke="#cfcfcf" stroke-width="1.1" fill="none" stroke-linejoin="miter"/>
<line x1="202.83" y1="505" x2="208.4" y2="505" stroke="#cfcfcf" stroke-width="1.1"/>
<line x1="169.43" y1="499.43" x2="180.57" y2="499.43" stroke="#cfcfcf" stroke-width="1.1"/>
<circle cx="169.71" cy="499.43" r="1.15" fill="#e0e0e0"/>
<line x1="169.43" y1="510.57" x2="180.57" y2="510.57" stroke="#cfcfcf" stroke-width="1.1"/>
<circle cx="169.71" cy="510.57" r="1.15" fill="#e0e0e0"/>
<line x1="169.43" y1="493.87" x2="180.57" y2="493.87" stroke="#cfcfcf" stroke-width="1.1"/>
<circle cx="169.71" cy="493.87" r="1.15" fill="#e0e0e0"/>
<line x1="169.43" y1="516.13" x2="180.57" y2="516.13" stroke="#cfcfcf" stroke-width="1.1"/>
<circle cx="169.71" cy="516.13" r="1.15" fill="#e0e0e0"/>
<line x1="169.43" y1="488.3" x2="180.57" y2="488.3" stroke="#cfcfcf" stroke-width="1.1"/>
<circle cx="169.71" cy="488.3" r="1.15" fill="#e0e0e0"/>
<line x1="169.43" y1="521.7" x2="180.57" y2="521.7" stroke="#cfcfcf" stroke-width="1.1"/>
<circle cx="169.71" cy="521.7" r="1.15" fill="#e0e0e0"/>
<line x1="169.43" y1="482.73" x2="180.57" y2="482.73" stroke="#cfcfcf" stroke-width="1.1"/>
<circle cx="169.71" cy="482.73" r="1.15" fill="#e0e0e0"/>
<line x1="169.43" y1="527.27" x2="180.57" y2="527.27" stroke="#cfcfcf" stroke-width="1.1"/>
<circle cx="169.71" cy="527.27" r="1.15" fill="#e0e0e0"/>
<text transform="translate(187.69 505) rotate(90) scale(0.77 1)" font-size="9" fill="#dcdcdc" text-anchor="middle">1x8</text>
<line x1="85.93" y1="621.9" x2="97.07" y2="621.9" stroke="#ececec" stroke-width="1.2"/>
<line x1="85.93" y1="616.33" x2="97.07" y2="616.33" stroke="#380808" stroke-width="2.7"/>
<line x1="85.93" y1="616.33" x2="97.07" y2="616.33" stroke="#962828" stroke-width="1.45"/>
<line x1="85.93" y1="610.77" x2="97.07" y2="610.77" stroke="#d2d2d2" stroke-width="1.2"/>
<line x1="85.93" y1="605.2" x2="97.07" y2="605.2" stroke="#d0be50" stroke-width="1.2"/>
<line x1="85.93" y1="599.63" x2="97.07" y2="599.63" stroke="#aa3cb4" stroke-width="1.2"/>
<line x1="386.53" y1="621.9" x2="397.67" y2="621.9" stroke="#ececec" stroke-width="1.2"/>
<line x1="386.53" y1="616.33" x2="397.67" y2="616.33" stroke="#380808" stroke-width="2.7"/>
<line x1="386.53" y1="616.33" x2="397.67" y2="616.33" stroke="#962828" stroke-width="1.45"/>
<line x1="386.53" y1="610.77" x2="397.67" y2="610.77" stroke="#d2d2d2" stroke-width="1.2"/>
<line x1="386.53" y1="605.2" x2="397.67" y2="605.2" stroke="#d0be50" stroke-width="1.2"/>
<line x1="386.53" y1="599.63" x2="397.67" y2="599.63" stroke="#aa3cb4" stroke-width="1.2"/>
<line x1="85.93" y1="727.67" x2="97.07" y2="727.67" stroke="#05053c" stroke-width="2.9"/>
<line x1="85.93" y1="727.67" x2="97.07" y2="727.67" stroke="#0f0f7c" stroke-width="1.5"/>
<line x1="85.93" y1="722.1" x2="97.07" y2="722.1" stroke="#c47242" stroke-width="1.2"/>
<line x1="85.93" y1="716.53" x2="97.07" y2="716.53" stroke="#0a3512" stroke-width="2.5"/>
<line x1="85.93" y1="716.53" x2="97.07" y2="716.53" stroke="#2cb848" stroke-width="1.4"/>
<line x1="85.93" y1="710.97" x2="97.07" y2="710.97" stroke="#8c5a2c" stroke-width="1.2"/>
<line x1="85.93" y1="683.13" x2="97.07" y2="683.13" stroke="#d0be50" stroke-width="1.2"/>
<line x1="85.93" y1="677.57" x2="97.07" y2="677.57" stroke="#aa3cb4" stroke-width="1.2"/>
<line x1="386.53" y1="727.67" x2="397.67" y2="727.67" stroke="#05053c" stroke-width="2.9"/>
<line x1="386.53" y1="727.67" x2="397.67" y2="727.67" stroke="#0f0f7c" stroke-width="1.5"/>
<line x1="386.53" y1="722.1" x2="397.67" y2="722.1" stroke="#c47242" stroke-width="1.2"/>
<line x1="386.53" y1="716.53" x2="397.67" y2="716.53" stroke="#0a3512" stroke-width="2.5"/>
<line x1="386.53" y1="716.53" x2="397.67" y2="716.53" stroke="#2cb848" stroke-width="1.4"/>
<line x1="386.53" y1="710.97" x2="397.67" y2="710.97" stroke="#8c5a2c" stroke-width="1.2"/>
<line x1="386.53" y1="705.4" x2="397.67" y2="705.4" stroke="#a0a0a0" stroke-width="1.2"/>
<line x1="386.53" y1="683.13" x2="397.67" y2="683.13" stroke="#d0be50" stroke-width="1.2"/>
<line x1="386.53" y1="677.57" x2="397.67" y2="677.57" stroke="#aa3cb4" stroke-width="1.2"/>
<line x1="386.53" y1="672" x2="397.67" y2="672" stroke="#b890b8" stroke-width="1.2"/>
<line x1="386.53" y1="666.43" x2="397.67" y2="666.43" stroke="#58c4b2" stroke-width="1.2"/>
<line x1="414.37" y1="649.73" x2="425.5" y2="649.73" stroke="#0a3512" stroke-width="2.5"/>
<line x1="414.37" y1="649.73" x2="425.5" y2="649.73" stroke="#2cb848" stroke-width="1.4"/>
<line x1="414.37" y1="644.17" x2="425.5" y2="644.17" stroke="#8c5a2c" stroke-width="1.2"/>
<line x1="85.93" y1="588.5" x2="397.67" y2="588.5" stroke="#58c4b2" stroke-width="1.2"/>
<line x1="85.93" y1="594.07" x2="397.67" y2="594.07" stroke="#b890b8" stroke-width="1.2"/>
<line x1="85.93" y1="627.47" x2="397.67" y2="627.47" stroke="#a0a0a0" stroke-width="1.2"/>
<line x1="85.93" y1="633.03" x2="397.67" y2="633.03" stroke="#8c5a2c" stroke-width="1.2"/>
<line x1="85.93" y1="638.6" x2="397.67" y2="638.6" stroke="#0a3512" stroke-width="2.5"/>
<line x1="85.93" y1="638.6" x2="397.67" y2="638.6" stroke="#2cb848" stroke-width="1.4"/>
<line x1="85.93" y1="644.17" x2="397.67" y2="644.17" stroke="#c47242" stroke-width="1.2"/>
<line x1="85.93" y1="649.73" x2="397.67" y2="649.73" stroke="#05053c" stroke-width="2.9"/>
<line x1="85.93" y1="649.73" x2="397.67" y2="649.73" stroke="#0f0f7c" stroke-width="1.5"/>
<line x1="85.93" y1="688.7" x2="397.67" y2="688.7" stroke="#d2d2d2" stroke-width="1.2"/>
<line x1="85.93" y1="694.27" x2="397.67" y2="694.27" stroke="#380808" stroke-width="2.7"/>
<line x1="85.93" y1="694.27" x2="397.67" y2="694.27" stroke="#962828" stroke-width="1.45"/>
<line x1="85.93" y1="699.83" x2="397.67" y2="699.83" stroke="#ececec" stroke-width="1.2"/>
<polyline points="85.93,666.43 319.73,666.43 319.73,510.57" stroke="#58c4b2" stroke-width="1.2" fill="none"/>
<polyline points="85.93,672 330.87,672 330.87,510.57" stroke="#b890b8" stroke-width="1.2" fill="none"/>
<polyline points="85.93,705.4 264.07,705.4 264.07,505 208.4,505" stroke="#a0a0a0" stroke-width="1.2" fill="none"/>
<polyline points="58.1,655.3 69.23,655.3 69.23,621.9 74.8,621.9" stroke="#c47242" stroke-width="1.2" fill="none"/>
<polyline points="58.1,660.87 69.23,660.87 69.23,699.83 74.8,699.83" stroke="#05053c" stroke-width="2.9" fill="none"/>
<polyline points="58.1,660.87 69.23,660.87 69.23,699.83 74.8,699.83" stroke="#0f0f7c" stroke-width="1.5" fill="none"/>
<polyline points="425.5,655.3 414.37,655.3 414.37,621.9 408.8,621.9" stroke="#c47242" stroke-width="1.2" fill="none"/>
<polyline points="425.5,660.87 414.37,660.87 414.37,699.83 408.8,699.83" stroke="#05053c" stroke-width="2.9" fill="none"/>
<polyline points="425.5,660.87 414.37,660.87 414.37,699.83 408.8,699.83" stroke="#0f0f7c" stroke-width="1.5" fill="none"/>
<rect x="102.63" y="454.9" width="278.33" height="278.33" stroke="#d0d0d0" stroke-width="1.35" fill="none"/>
<line x1="204.78" y1="584.88" x2="212.02" y2="592.12" stroke="#cacaca" stroke-width="0.95"/>
<line x1="204.78" y1="592.12" x2="212.02" y2="584.88" stroke="#cacaca" stroke-width="0.95"/>
<line x1="204.78" y1="590.45" x2="212.02" y2="597.68" stroke="#cacaca" stroke-width="0.95"/>
<line x1="204.78" y1="597.68" x2="212.02" y2="590.45" stroke="#cacaca" stroke-width="0.95"/>
<line x1="204.78" y1="623.85" x2="212.02" y2="631.08" stroke="#cacaca" stroke-width="0.95"/>
<line x1="204.78" y1="631.08" x2="212.02" y2="623.85" stroke="#cacaca" stroke-width="0.95"/>
<line x1="204.78" y1="629.41" x2="212.02" y2="636.65" stroke="#cacaca" stroke-width="0.95"/>
<line x1="204.78" y1="636.65" x2="212.02" y2="629.41" stroke="#cacaca" stroke-width="0.95"/>
<line x1="204.78" y1="634.98" x2="212.02" y2="642.22" stroke="#cacaca" stroke-width="0.95"/>
<line x1="204.78" y1="642.22" x2="212.02" y2="634.98" stroke="#cacaca" stroke-width="0.95"/>
<line x1="204.78" y1="640.55" x2="212.02" y2="647.78" stroke="#cacaca" stroke-width="0.95"/>
<line x1="204.78" y1="647.78" x2="212.02" y2="640.55" stroke="#cacaca" stroke-width="0.95"/>
<line x1="204.78" y1="646.12" x2="212.02" y2="653.35" stroke="#cacaca" stroke-width="0.95"/>
<line x1="204.78" y1="653.35" x2="212.02" y2="646.12" stroke="#cacaca" stroke-width="0.95"/>
<line x1="204.78" y1="685.08" x2="212.02" y2="692.32" stroke="#cacaca" stroke-width="0.95"/>
<line x1="204.78" y1="692.32" x2="212.02" y2="685.08" stroke="#cacaca" stroke-width="0.95"/>
<line x1="204.78" y1="690.65" x2="212.02" y2="697.88" stroke="#cacaca" stroke-width="0.95"/>
<line x1="204.78" y1="697.88" x2="212.02" y2="690.65" stroke="#cacaca" stroke-width="0.95"/>
<line x1="204.78" y1="696.21" x2="212.02" y2="703.45" stroke="#cacaca" stroke-width="0.95"/>
<line x1="204.78" y1="703.45" x2="212.02" y2="696.21" stroke="#cacaca" stroke-width="0.95"/>
<rect x="316.95" y="499.43" width="5.57" height="11.13" stroke="#d2d2d2" stroke-width="1.3" fill="none"/>
<line x1="316.95" y1="499.43" x2="322.52" y2="510.57" stroke="#d2d2d2" stroke-width="0.9"/>
<line x1="316.95" y1="510.57" x2="322.52" y2="499.43" stroke="#d2d2d2" stroke-width="0.9"/>
<rect x="328.08" y="499.43" width="5.57" height="11.13" stroke="#d2d2d2" stroke-width="1.3" fill="none"/>
<line x1="328.08" y1="499.43" x2="333.65" y2="510.57" stroke="#d2d2d2" stroke-width="0.9"/>
<line x1="328.08" y1="510.57" x2="333.65" y2="499.43" stroke="#d2d2d2" stroke-width="0.9"/>
<rect x="80.37" y="582.93" width="11.13" height="72.37" rx="5.57" ry="5.57" stroke="#d2d2d2" stroke-width="1.15" fill="none"/>
<line x1="74.8" y1="621.9" x2="80.37" y2="621.9" stroke="#d2d2d2" stroke-width="1.3"/>
<text transform="translate(96.79 582.93) rotate(-90) scale(0.74 1)" font-size="7.4" fill="#f4f4f4" text-anchor="middle">12</text>
<text transform="translate(96.79 653.52) rotate(-90) scale(0.74 1)" font-size="7.4" fill="#f4f4f4" text-anchor="middle">1</text>
<rect x="392.1" y="582.93" width="11.13" height="72.37" rx="5.57" ry="5.57" stroke="#d2d2d2" stroke-width="1.15" fill="none"/>
<line x1="403.23" y1="621.9" x2="408.8" y2="621.9" stroke="#d2d2d2" stroke-width="1.3"/>
<text transform="translate(383.47 582.93) rotate(90) scale(0.74 1)" font-size="7.4" fill="#f4f4f4" text-anchor="middle">12</text>
<text transform="translate(383.47 653.07) rotate(90) scale(0.74 1)" font-size="7.4" fill="#f4f4f4" text-anchor="middle">1</text>
<rect x="80.37" y="660.87" width="11.13" height="72.37" rx="5.57" ry="5.57" stroke="#d2d2d2" stroke-width="1.15" fill="none"/>
<line x1="74.8" y1="699.83" x2="80.37" y2="699.83" stroke="#d2d2d2" stroke-width="1.3"/>
<text transform="translate(96.79 660.87) rotate(-90) scale(0.74 1)" font-size="7.4" fill="#f4f4f4" text-anchor="middle">12</text>
<text transform="translate(96.79 731.45) rotate(-90) scale(0.74 1)" font-size="7.4" fill="#f4f4f4" text-anchor="middle">1</text>
<rect x="392.1" y="660.87" width="11.13" height="72.37" rx="5.57" ry="5.57" stroke="#d2d2d2" stroke-width="1.15" fill="none"/>
<line x1="403.23" y1="699.83" x2="408.8" y2="699.83" stroke="#d2d2d2" stroke-width="1.3"/>
<text transform="translate(383.47 660.87) rotate(90) scale(0.74 1)" font-size="7.4" fill="#f4f4f4" text-anchor="middle">12</text>
<text transform="translate(383.47 731.01) rotate(90) scale(0.74 1)" font-size="7.4" fill="#f4f4f4" text-anchor="middle">1</text>
<rect x="52.53" y="649.73" width="11.13" height="16.7" rx="5.57" ry="5.57" stroke="#d2d2d2" stroke-width="1.15" fill="none"/>
<line x1="46.97" y1="660.87" x2="52.53" y2="660.87" stroke="#d2d2d2" stroke-width="1.3"/>
<text transform="translate(68.95 651.4) rotate(-90) scale(0.74 1)" font-size="7.4" fill="#f4f4f4" text-anchor="middle">2</text>
<text transform="translate(68.95 664.65) rotate(-90) scale(0.74 1)" font-size="7.4" fill="#f4f4f4" text-anchor="middle">1</text>
<rect x="419.93" y="638.6" width="11.13" height="27.83" rx="5.57" ry="5.57" stroke="#d2d2d2" stroke-width="1.15" fill="none"/>
<line x1="431.07" y1="655.3" x2="436.63" y2="655.3" stroke="#d2d2d2" stroke-width="1.3"/>
<text transform="translate(411.3 640.27) rotate(90) scale(0.74 1)" font-size="7.4" fill="#f4f4f4" text-anchor="middle">4</text>
<text transform="translate(411.3 664.21) rotate(90) scale(0.74 1)" font-size="7.4" fill="#f4f4f4" text-anchor="middle">1</text>
<circle cx="208.4" cy="505" r="1.4" fill="#f0f0f0"/>
<text x="55" y="443.77" class="t">B2-2-5</text>
<text x="61.4" y="754.07" class="o">OLT</text>
</g>
<g>
<polyline points="575.8,471.6 575.8,538.4 603.63,505 575.8,471.6" stroke="#cfcfcf" stroke-width="1.1" fill="none" stroke-linejoin="miter"/>
<line x1="603.63" y1="505" x2="609.2" y2="505" stroke="#cfcfcf" stroke-width="1.1"/>
<line x1="570.23" y1="499.43" x2="581.37" y2="499.43" stroke="#cfcfcf" stroke-width="1.1"/>
<circle cx="570.51" cy="499.43" r="1.15" fill="#e0e0e0"/>
<line x1="570.23" y1="510.57" x2="581.37" y2="510.57" stroke="#cfcfcf" stroke-width="1.1"/>
<circle cx="570.51" cy="510.57" r="1.15" fill="#e0e0e0"/>
<line x1="570.23" y1="493.87" x2="581.37" y2="493.87" stroke="#cfcfcf" stroke-width="1.1"/>
<circle cx="570.51" cy="493.87" r="1.15" fill="#e0e0e0"/>
<line x1="570.23" y1="516.13" x2="581.37" y2="516.13" stroke="#cfcfcf" stroke-width="1.1"/>
<circle cx="570.51" cy="516.13" r="1.15" fill="#e0e0e0"/>
<line x1="570.23" y1="488.3" x2="581.37" y2="488.3" stroke="#cfcfcf" stroke-width="1.1"/>
<circle cx="570.51" cy="488.3" r="1.15" fill="#e0e0e0"/>
<line x1="570.23" y1="521.7" x2="581.37" y2="521.7" stroke="#cfcfcf" stroke-width="1.1"/>
<circle cx="570.51" cy="521.7" r="1.15" fill="#e0e0e0"/>
<line x1="570.23" y1="482.73" x2="581.37" y2="482.73" stroke="#cfcfcf" stroke-width="1.1"/>
<circle cx="570.51" cy="482.73" r="1.15" fill="#e0e0e0"/>
<line x1="570.23" y1="527.27" x2="581.37" y2="527.27" stroke="#cfcfcf" stroke-width="1.1"/>
<circle cx="570.51" cy="527.27" r="1.15" fill="#e0e0e0"/>
<text transform="translate(588.49 505) rotate(90) scale(0.77 1)" font-size="9" fill="#dcdcdc" text-anchor="middle">1x8</text>
<line x1="787.33" y1="699.83" x2="798.47" y2="699.83" stroke="#ececec" stroke-width="1.2"/>
<line x1="458.9" y1="649.73" x2="470.03" y2="649.73" stroke="#0a3512" stroke-width="2.5"/>
<line x1="458.9" y1="649.73" x2="470.03" y2="649.73" stroke="#2cb848" stroke-width="1.4"/>
<line x1="458.9" y1="644.17" x2="470.03" y2="644.17" stroke="#8c5a2c" stroke-width="1.2"/>
<line x1="815.17" y1="649.73" x2="826.3" y2="649.73" stroke="#0a3512" stroke-width="2.5"/>
<line x1="815.17" y1="649.73" x2="826.3" y2="649.73" stroke="#2cb848" stroke-width="1.4"/>
<line x1="815.17" y1="644.17" x2="826.3" y2="644.17" stroke="#8c5a2c" stroke-width="1.2"/>
<line x1="486.73" y1="666.43" x2="798.47" y2="666.43" stroke="#58c4b2" stroke-width="1.2"/>
<line x1="486.73" y1="672" x2="798.47" y2="672" stroke="#b890b8" stroke-width="1.2"/>
<line x1="486.73" y1="677.57" x2="798.47" y2="677.57" stroke="#aa3cb4" stroke-width="1.2"/>
<line x1="486.73" y1="683.13" x2="798.47" y2="683.13" stroke="#d0be50" stroke-width="1.2"/>
<line x1="486.73" y1="688.7" x2="798.47" y2="688.7" stroke="#d2d2d2" stroke-width="1.2"/>
<line x1="486.73" y1="694.27" x2="798.47" y2="694.27" stroke="#380808" stroke-width="2.7"/>
<line x1="486.73" y1="694.27" x2="798.47" y2="694.27" stroke="#962828" stroke-width="1.45"/>
<line x1="486.73" y1="705.4" x2="798.47" y2="705.4" stroke="#a0a0a0" stroke-width="1.2"/>
<line x1="486.73" y1="710.97" x2="798.47" y2="710.97" stroke="#8c5a2c" stroke-width="1.2"/>
<line x1="486.73" y1="716.53" x2="798.47" y2="716.53" stroke="#0a3512" stroke-width="2.5"/>
<line x1="486.73" y1="716.53" x2="798.47" y2="716.53" stroke="#2cb848" stroke-width="1.4"/>
<line x1="486.73" y1="722.1" x2="798.47" y2="722.1" stroke="#c47242" stroke-width="1.2"/>
<line x1="486.73" y1="727.67" x2="798.47" y2="727.67" stroke="#05053c" stroke-width="2.9"/>
<line x1="486.73" y1="727.67" x2="798.47" y2="727.67" stroke="#0f0f7c" stroke-width="1.5"/>
<polyline points="486.73,699.83 664.87,699.83 664.87,505 609.2,505" stroke="#ececec" stroke-width="1.2" fill="none"/>
<polyline points="458.9,655.3 826.3,655.3" stroke="#c47242" stroke-width="1.2" fill="none"/>
<polyline points="458.9,660.87 470.03,660.87 470.03,699.83 475.6,699.83" stroke="#05053c" stroke-width="2.9" fill="none"/>
<polyline points="458.9,660.87 470.03,660.87 470.03,699.83 475.6,699.83" stroke="#0f0f7c" stroke-width="1.5" fill="none"/>
<polyline points="826.3,660.87 815.17,660.87 815.17,699.83 809.6,699.83" stroke="#05053c" stroke-width="2.9" fill="none"/>
<polyline points="826.3,660.87 815.17,660.87 815.17,699.83 809.6,699.83" stroke="#0f0f7c" stroke-width="1.5" fill="none"/>
<rect x="503.43" y="454.9" width="278.33" height="278.33" stroke="#d0d0d0" stroke-width="1.35" fill="none"/>
<rect x="481.17" y="660.87" width="11.13" height="72.37" rx="5.57" ry="5.57" stroke="#d2d2d2" stroke-width="1.15" fill="none"/>
<line x1="475.6" y1="699.83" x2="481.17" y2="699.83" stroke="#d2d2d2" stroke-width="1.3"/>
<text transform="translate(497.59 660.87) rotate(-90) scale(0.74 1)" font-size="7.4" fill="#f4f4f4" text-anchor="middle">12</text>
<text transform="translate(497.59 731.45) rotate(-90) scale(0.74 1)" font-size="7.4" fill="#f4f4f4" text-anchor="middle">1</text>
<rect x="792.9" y="660.87" width="11.13" height="72.37" rx="5.57" ry="5.57" stroke="#d2d2d2" stroke-width="1.15" fill="none"/>
<line x1="804.03" y1="699.83" x2="809.6" y2="699.83" stroke="#d2d2d2" stroke-width="1.3"/>
<text transform="translate(784.27 660.87) rotate(90) scale(0.74 1)" font-size="7.4" fill="#f4f4f4" text-anchor="middle">12</text>
<text transform="translate(784.27 731.01) rotate(90) scale(0.74 1)" font-size="7.4" fill="#f4f4f4" text-anchor="middle">1</text>
<rect x="453.33" y="638.6" width="11.13" height="27.83" rx="5.57" ry="5.57" stroke="#d2d2d2" stroke-width="1.15" fill="none"/>
<line x1="447.77" y1="655.3" x2="453.33" y2="655.3" stroke="#d2d2d2" stroke-width="1.3"/>
<text transform="translate(469.75 640.27) rotate(-90) scale(0.74 1)" font-size="7.4" fill="#f4f4f4" text-anchor="middle">4</text>
<text transform="translate(469.75 664.65) rotate(-90) scale(0.74 1)" font-size="7.4" fill="#f4f4f4" text-anchor="middle">1</text>
<rect x="820.73" y="638.6" width="11.13" height="27.83" rx="5.57" ry="5.57" stroke="#d2d2d2" stroke-width="1.15" fill="none"/>
<line x1="831.87" y1="655.3" x2="837.43" y2="655.3" stroke="#d2d2d2" stroke-width="1.3"/>
<text transform="translate(812.1 640.27) rotate(90) scale(0.74 1)" font-size="7.4" fill="#f4f4f4" text-anchor="middle">4</text>
<text transform="translate(812.1 664.21) rotate(90) scale(0.74 1)" font-size="7.4" fill="#f4f4f4" text-anchor="middle">1</text>
<circle cx="609.2" cy="505" r="1.4" fill="#f0f0f0"/>
<text x="455.8" y="443.77" class="t">B2-2-6</text>
<text x="462.2" y="754.07" class="o">OLT</text>
</g>
<g>
<polyline points="976.6,471.6 976.6,538.4 1004.43,505 976.6,471.6" stroke="#cfcfcf" stroke-width="1.1" fill="none" stroke-linejoin="miter"/>
<line x1="1004.43" y1="505" x2="1010" y2="505" stroke="#cfcfcf" stroke-width="1.1"/>
<line x1="971.03" y1="499.43" x2="982.17" y2="499.43" stroke="#cfcfcf" stroke-width="1.1"/>
<circle cx="971.31" cy="499.43" r="1.15" fill="#e0e0e0"/>
<line x1="971.03" y1="510.57" x2="982.17" y2="510.57" stroke="#cfcfcf" stroke-width="1.1"/>
<circle cx="971.31" cy="510.57" r="1.15" fill="#e0e0e0"/>
<line x1="971.03" y1="493.87" x2="982.17" y2="493.87" stroke="#cfcfcf" stroke-width="1.1"/>
<circle cx="971.31" cy="493.87" r="1.15" fill="#e0e0e0"/>
<line x1="971.03" y1="516.13" x2="982.17" y2="516.13" stroke="#cfcfcf" stroke-width="1.1"/>
<circle cx="971.31" cy="516.13" r="1.15" fill="#e0e0e0"/>
<line x1="971.03" y1="488.3" x2="982.17" y2="488.3" stroke="#cfcfcf" stroke-width="1.1"/>
<circle cx="971.31" cy="488.3" r="1.15" fill="#e0e0e0"/>
<line x1="971.03" y1="521.7" x2="982.17" y2="521.7" stroke="#cfcfcf" stroke-width="1.1"/>
<circle cx="971.31" cy="521.7" r="1.15" fill="#e0e0e0"/>
<line x1="971.03" y1="482.73" x2="982.17" y2="482.73" stroke="#cfcfcf" stroke-width="1.1"/>
<circle cx="971.31" cy="482.73" r="1.15" fill="#e0e0e0"/>
<line x1="971.03" y1="527.27" x2="982.17" y2="527.27" stroke="#cfcfcf" stroke-width="1.1"/>
<circle cx="971.31" cy="527.27" r="1.15" fill="#e0e0e0"/>
<text transform="translate(989.29 505) rotate(90) scale(0.77 1)" font-size="9" fill="#dcdcdc" text-anchor="middle">1x8</text>
<line x1="887.53" y1="705.4" x2="898.67" y2="705.4" stroke="#a0a0a0" stroke-width="1.2"/>
<line x1="887.53" y1="699.83" x2="898.67" y2="699.83" stroke="#ececec" stroke-width="1.2"/>
<line x1="887.53" y1="683.13" x2="898.67" y2="683.13" stroke="#d0be50" stroke-width="1.2"/>
<line x1="887.53" y1="677.57" x2="898.67" y2="677.57" stroke="#aa3cb4" stroke-width="1.2"/>
<line x1="1188.13" y1="705.4" x2="1199.27" y2="705.4" stroke="#a0a0a0" stroke-width="1.2"/>
<line x1="1188.13" y1="699.83" x2="1199.27" y2="699.83" stroke="#ececec" stroke-width="1.2"/>
<line x1="1188.13" y1="694.27" x2="1199.27" y2="694.27" stroke="#380808" stroke-width="2.7"/>
<line x1="1188.13" y1="694.27" x2="1199.27" y2="694.27" stroke="#962828" stroke-width="1.45"/>
<line x1="1188.13" y1="683.13" x2="1199.27" y2="683.13" stroke="#d0be50" stroke-width="1.2"/>
<line x1="1188.13" y1="677.57" x2="1199.27" y2="677.57" stroke="#aa3cb4" stroke-width="1.2"/>
<line x1="859.7" y1="649.73" x2="870.83" y2="649.73" stroke="#0a3512" stroke-width="2.5"/>
<line x1="859.7" y1="649.73" x2="870.83" y2="649.73" stroke="#2cb848" stroke-width="1.4"/>
<line x1="859.7" y1="644.17" x2="870.83" y2="644.17" stroke="#8c5a2c" stroke-width="1.2"/>
<line x1="1215.97" y1="649.73" x2="1227.1" y2="649.73" stroke="#0a3512" stroke-width="2.5"/>
<line x1="1215.97" y1="649.73" x2="1227.1" y2="649.73" stroke="#2cb848" stroke-width="1.4"/>
<line x1="1215.97" y1="644.17" x2="1227.1" y2="644.17" stroke="#8c5a2c" stroke-width="1.2"/>
<line x1="887.53" y1="666.43" x2="1199.27" y2="666.43" stroke="#58c4b2" stroke-width="1.2"/>
<line x1="887.53" y1="672" x2="1199.27" y2="672" stroke="#b890b8" stroke-width="1.2"/>
<line x1="887.53" y1="688.7" x2="1199.27" y2="688.7" stroke="#d2d2d2" stroke-width="1.2"/>
<line x1="887.53" y1="710.97" x2="1199.27" y2="710.97" stroke="#8c5a2c" stroke-width="1.2"/>
<line x1="887.53" y1="716.53" x2="1199.27" y2="716.53" stroke="#0a3512" stroke-width="2.5"/>
<line x1="887.53" y1="716.53" x2="1199.27" y2="716.53" stroke="#2cb848" stroke-width="1.4"/>
<line x1="887.53" y1="722.1" x2="1199.27" y2="722.1" stroke="#c47242" stroke-width="1.2"/>
<line x1="887.53" y1="727.67" x2="1199.27" y2="727.67" stroke="#05053c" stroke-width="2.9"/>
<line x1="887.53" y1="727.67" x2="1199.27" y2="727.67" stroke="#0f0f7c" stroke-width="1.5"/>
<polyline points="887.53,694.27 1065.67,694.27 1065.67,505 1010,505" stroke="#380808" stroke-width="2.7" fill="none"/>
<polyline points="887.53,694.27 1065.67,694.27 1065.67,505 1010,505" stroke="#962828" stroke-width="1.45" fill="none"/>
<polyline points="859.7,655.3 1227.1,655.3" stroke="#c47242" stroke-width="1.2" fill="none"/>
<polyline points="859.7,660.87 870.83,660.87 870.83,699.83 876.4,699.83" stroke="#05053c" stroke-width="2.9" fill="none"/>
<polyline points="859.7,660.87 870.83,660.87 870.83,699.83 876.4,699.83" stroke="#0f0f7c" stroke-width="1.5" fill="none"/>
<polyline points="1227.1,660.87 1215.97,660.87 1215.97,699.83 1210.4,699.83" stroke="#05053c" stroke-width="2.9" fill="none"/>
<polyline points="1227.1,660.87 1215.97,660.87 1215.97,699.83 1210.4,699.83" stroke="#0f0f7c" stroke-width="1.5" fill="none"/>
<rect x="904.23" y="454.9" width="278.33" height="278.33" stroke="#d0d0d0" stroke-width="1.35" fill="none"/>
<line x1="1006.38" y1="662.81" x2="1013.62" y2="670.05" stroke="#cacaca" stroke-width="0.95"/>
<line x1="1006.38" y1="670.05" x2="1013.62" y2="662.81" stroke="#cacaca" stroke-width="0.95"/>
<line x1="1006.38" y1="668.38" x2="1013.62" y2="675.62" stroke="#cacaca" stroke-width="0.95"/>
<line x1="1006.38" y1="675.62" x2="1013.62" y2="668.38" stroke="#cacaca" stroke-width="0.95"/>
<line x1="1006.38" y1="685.08" x2="1013.62" y2="692.32" stroke="#cacaca" stroke-width="0.95"/>
<line x1="1006.38" y1="692.32" x2="1013.62" y2="685.08" stroke="#cacaca" stroke-width="0.95"/>
<line x1="1006.38" y1="707.35" x2="1013.62" y2="714.58" stroke="#cacaca" stroke-width="0.95"/>
<line x1="1006.38" y1="714.58" x2="1013.62" y2="707.35" stroke="#cacaca" stroke-width="0.95"/>
<line x1="1006.38" y1="712.91" x2="1013.62" y2="720.15" stroke="#cacaca" stroke-width="0.95"/>
<line x1="1006.38" y1="720.15" x2="1013.62" y2="712.91" stroke="#cacaca" stroke-width="0.95"/>
<line x1="1006.38" y1="718.48" x2="1013.62" y2="725.72" stroke="#cacaca" stroke-width="0.95"/>
<line x1="1006.38" y1="725.72" x2="1013.62" y2="718.48" stroke="#cacaca" stroke-width="0.95"/>
<line x1="1006.38" y1="724.05" x2="1013.62" y2="731.28" stroke="#cacaca" stroke-width="0.95"/>
<line x1="1006.38" y1="731.28" x2="1013.62" y2="724.05" stroke="#cacaca" stroke-width="0.95"/>
<rect x="881.97" y="660.87" width="11.13" height="72.37" rx="5.57" ry="5.57" stroke="#d2d2d2" stroke-width="1.15" fill="none"/>
<line x1="876.4" y1="699.83" x2="881.97" y2="699.83" stroke="#d2d2d2" stroke-width="1.3"/>
<text transform="translate(898.39 660.87) rotate(-90) scale(0.74 1)" font-size="7.4" fill="#f4f4f4" text-anchor="middle">12</text>
<text transform="translate(898.39 731.45) rotate(-90) scale(0.74 1)" font-size="7.4" fill="#f4f4f4" text-anchor="middle">1</text>
<rect x="1193.7" y="660.87" width="11.13" height="72.37" rx="5.57" ry="5.57" stroke="#d2d2d2" stroke-width="1.15" fill="none"/>
<line x1="1204.83" y1="699.83" x2="1210.4" y2="699.83" stroke="#d2d2d2" stroke-width="1.3"/>
<text transform="translate(1185.07 660.87) rotate(90) scale(0.74 1)" font-size="7.4" fill="#f4f4f4" text-anchor="middle">12</text>
<text transform="translate(1185.07 731.01) rotate(90) scale(0.74 1)" font-size="7.4" fill="#f4f4f4" text-anchor="middle">1</text>
<rect x="854.13" y="638.6" width="11.13" height="27.83" rx="5.57" ry="5.57" stroke="#d2d2d2" stroke-width="1.15" fill="none"/>
<line x1="848.57" y1="655.3" x2="854.13" y2="655.3" stroke="#d2d2d2" stroke-width="1.3"/>
<text transform="translate(870.55 640.27) rotate(-90) scale(0.74 1)" font-size="7.4" fill="#f4f4f4" text-anchor="middle">4</text>
<text transform="translate(870.55 664.65) rotate(-90) scale(0.74 1)" font-size="7.4" fill="#f4f4f4" text-anchor="middle">1</text>
<rect x="1221.53" y="638.6" width="11.13" height="27.83" rx="5.57" ry="5.57" stroke="#d2d2d2" stroke-width="1.15" fill="none"/>
<line x1="1232.67" y1="655.3" x2="1238.23" y2="655.3" stroke="#d2d2d2" stroke-width="1.3"/>
<text transform="translate(1212.9 640.27) rotate(90) scale(0.74 1)" font-size="7.4" fill="#f4f4f4" text-anchor="middle">4</text>
<text transform="translate(1212.9 664.21) rotate(90) scale(0.74 1)" font-size="7.4" fill="#f4f4f4" text-anchor="middle">1</text>
<circle cx="1010" cy="505" r="1.4" fill="#f0f0f0"/>
<text x="856.6" y="443.77" class="t">B2-2-7</text>
<text x="863" y="754.07" class="o">OLT</text>
</g>
<g>
<polyline points="175,844.57 175,911.37 202.83,877.97 175,844.57" stroke="#cfcfcf" stroke-width="1.1" fill="none" stroke-linejoin="miter"/>
<line x1="202.83" y1="877.97" x2="208.4" y2="877.97" stroke="#cfcfcf" stroke-width="1.1"/>
<line x1="169.43" y1="872.4" x2="180.57" y2="872.4" stroke="#cfcfcf" stroke-width="1.1"/>
<circle cx="169.71" cy="872.4" r="1.15" fill="#e0e0e0"/>
<line x1="169.43" y1="883.53" x2="180.57" y2="883.53" stroke="#cfcfcf" stroke-width="1.1"/>
<circle cx="169.71" cy="883.53" r="1.15" fill="#e0e0e0"/>
<line x1="169.43" y1="866.83" x2="180.57" y2="866.83" stroke="#cfcfcf" stroke-width="1.1"/>
<circle cx="169.71" cy="866.83" r="1.15" fill="#e0e0e0"/>
<line x1="169.43" y1="889.1" x2="180.57" y2="889.1" stroke="#cfcfcf" stroke-width="1.1"/>
<circle cx="169.71" cy="889.1" r="1.15" fill="#e0e0e0"/>
<line x1="169.43" y1="861.27" x2="180.57" y2="861.27" stroke="#cfcfcf" stroke-width="1.1"/>
<circle cx="169.71" cy="861.27" r="1.15" fill="#e0e0e0"/>
<line x1="169.43" y1="894.67" x2="180.57" y2="894.67" stroke="#cfcfcf" stroke-width="1.1"/>
<circle cx="169.71" cy="894.67" r="1.15" fill="#e0e0e0"/>
<line x1="169.43" y1="855.7" x2="180.57" y2="855.7" stroke="#cfcfcf" stroke-width="1.1"/>
<circle cx="169.71" cy="855.7" r="1.15" fill="#e0e0e0"/>
<line x1="169.43" y1="900.23" x2="180.57" y2="900.23" stroke="#cfcfcf" stroke-width="1.1"/>
<circle cx="169.71" cy="900.23" r="1.15" fill="#e0e0e0"/>
<text transform="translate(187.69 877.97) rotate(90) scale(0.77 1)" font-size="9" fill="#dcdcdc" text-anchor="middle">1x8</text>
<line x1="386.53" y1="1061.67" x2="397.67" y2="1061.67" stroke="#d2d2d2" stroke-width="1.2"/>
<line x1="58.1" y1="1022.7" x2="69.23" y2="1022.7" stroke="#0a3512" stroke-width="2.5"/>
<line x1="58.1" y1="1022.7" x2="69.23" y2="1022.7" stroke="#2cb848" stroke-width="1.4"/>
<line x1="58.1" y1="1017.13" x2="69.23" y2="1017.13" stroke="#8c5a2c" stroke-width="1.2"/>
<line x1="414.37" y1="1022.7" x2="425.5" y2="1022.7" stroke="#0a3512" stroke-width="2.5"/>
<line x1="414.37" y1="1022.7" x2="425.5" y2="1022.7" stroke="#2cb848" stroke-width="1.4"/>
<line x1="414.37" y1="1017.13" x2="425.5" y2="1017.13" stroke="#8c5a2c" stroke-width="1.2"/>
<line x1="85.93" y1="1039.4" x2="397.67" y2="1039.4" stroke="#58c4b2" stroke-width="1.2"/>
<line x1="85.93" y1="1044.97" x2="397.67" y2="1044.97" stroke="#b890b8" stroke-width="1.2"/>
<line x1="85.93" y1="1050.53" x2="397.67" y2="1050.53" stroke="#aa3cb4" stroke-width="1.2"/>
<line x1="85.93" y1="1056.1" x2="397.67" y2="1056.1" stroke="#d0be50" stroke-width="1.2"/>
<line x1="85.93" y1="1067.23" x2="397.67" y2="1067.23" stroke="#380808" stroke-width="2.7"/>
<line x1="85.93" y1="1067.23" x2="397.67" y2="1067.23" stroke="#962828" stroke-width="1.45"/>
<line x1="85.93" y1="1072.8" x2="397.67" y2="1072.8" stroke="#ececec" stroke-width="1.2"/>
<line x1="85.93" y1="1078.37" x2="397.67" y2="1078.37" stroke="#a0a0a0" stroke-width="1.2"/>
<line x1="85.93" y1="1083.93" x2="397.67" y2="1083.93" stroke="#8c5a2c" stroke-width="1.2"/>
<line x1="85.93" y1="1089.5" x2="397.67" y2="1089.5" stroke="#0a3512" stroke-width="2.5"/>
<line x1="85.93" y1="1089.5" x2="397.67" y2="1089.5" stroke="#2cb848" stroke-width="1.4"/>
<line x1="85.93" y1="1095.07" x2="397.67" y2="1095.07" stroke="#c47242" stroke-width="1.2"/>
<line x1="85.93" y1="1100.63" x2="397.67" y2="1100.63" stroke="#05053c" stroke-width="2.9"/>
<line x1="85.93" y1="1100.63" x2="397.67" y2="1100.63" stroke="#0f0f7c" stroke-width="1.5"/>
<polyline points="85.93,1061.67 264.07,1061.67 264.07,877.97 208.4,877.97" stroke="#d2d2d2" stroke-width="1.2" fill="none"/>
<polyline points="58.1,1028.27 425.5,1028.27" stroke="#c47242" stroke-width="1.2" fill="none"/>
<polyline points="58.1,1033.83 69.23,1033.83 69.23,1072.8 74.8,1072.8" stroke="#05053c" stroke-width="2.9" fill="none"/>
<polyline points="58.1,1033.83 69.23,1033.83 69.23,1072.8 74.8,1072.8" stroke="#0f0f7c" stroke-width="1.5" fill="none"/>
<polyline points="425.5,1033.83 414.37,1033.83 414.37,1072.8 408.8,1072.8" stroke="#05053c" stroke-width="2.9" fill="none"/>
<polyline points="425.5,1033.83 414.37,1033.83 414.37,1072.8 408.8,1072.8" stroke="#0f0f7c" stroke-width="1.5" fill="none"/>
<rect x="102.63" y="827.87" width="278.33" height="278.33" stroke="#d0d0d0" stroke-width="1.35" fill="none"/>
<rect x="80.37" y="1033.83" width="11.13" height="72.37" rx="5.57" ry="5.57" stroke="#d2d2d2" stroke-width="1.15" fill="none"/>
<line x1="74.8" y1="1072.8" x2="80.37" y2="1072.8" stroke="#d2d2d2" stroke-width="1.3"/>
<text transform="translate(96.79 1033.83) rotate(-90) scale(0.74 1)" font-size="7.4" fill="#f4f4f4" text-anchor="middle">12</text>
<text transform="translate(96.79 1104.42) rotate(-90) scale(0.74 1)" font-size="7.4" fill="#f4f4f4" text-anchor="middle">1</text>
<rect x="392.1" y="1033.83" width="11.13" height="72.37" rx="5.57" ry="5.57" stroke="#d2d2d2" stroke-width="1.15" fill="none"/>
<line x1="403.23" y1="1072.8" x2="408.8" y2="1072.8" stroke="#d2d2d2" stroke-width="1.3"/>
<text transform="translate(383.47 1033.83) rotate(90) scale(0.74 1)" font-size="7.4" fill="#f4f4f4" text-anchor="middle">12</text>
<text transform="translate(383.47 1103.97) rotate(90) scale(0.74 1)" font-size="7.4" fill="#f4f4f4" text-anchor="middle">1</text>
<rect x="52.53" y="1011.57" width="11.13" height="27.83" rx="5.57" ry="5.57" stroke="#d2d2d2" stroke-width="1.15" fill="none"/>
<line x1="46.97" y1="1028.27" x2="52.53" y2="1028.27" stroke="#d2d2d2" stroke-width="1.3"/>
<text transform="translate(68.95 1013.24) rotate(-90) scale(0.74 1)" font-size="7.4" fill="#f4f4f4" text-anchor="middle">4</text>
<text transform="translate(68.95 1037.62) rotate(-90) scale(0.74 1)" font-size="7.4" fill="#f4f4f4" text-anchor="middle">1</text>
<rect x="419.93" y="1011.57" width="11.13" height="27.83" rx="5.57" ry="5.57" stroke="#d2d2d2" stroke-width="1.15" fill="none"/>
<line x1="431.07" y1="1028.27" x2="436.63" y2="1028.27" stroke="#d2d2d2" stroke-width="1.3"/>
<text transform="translate(411.3 1013.24) rotate(90) scale(0.74 1)" font-size="7.4" fill="#f4f4f4" text-anchor="middle">4</text>
<text transform="translate(411.3 1037.17) rotate(90) scale(0.74 1)" font-size="7.4" fill="#f4f4f4" text-anchor="middle">1</text>
<circle cx="208.4" cy="877.97" r="1.4" fill="#f0f0f0"/>
<text x="55" y="816.73" class="t">B2-2-8</text>
<text x="61.4" y="1127.03" class="o">OLT</text>
</g>
<g>
<text x="1258" y="431.3" fill="#f4f4f4" class="lb" textLength="64.5" lengthAdjust="spacingAndGlyphs">Legenda:</text>
<text x="1259.2" y="454.7" fill="#dcdcdc" class="l" textLength="53" lengthAdjust="spacingAndGlyphs">Vlákna:</text>
<text x="1258.6" y="470.4" fill="#18188e" class="l" textLength="58" lengthAdjust="spacingAndGlyphs">1. Modrý</text>
<text x="1353.2" y="470.4" fill="#18188e" class="l" textLength="110" lengthAdjust="spacingAndGlyphs">13. Modročierny</text>
<text x="1258.6" y="492.67" fill="#be7444" class="l" textLength="85" lengthAdjust="spacingAndGlyphs">2. Oranžový</text>
<text x="1353.2" y="492.67" fill="#dedede" class="l" textLength="136" lengthAdjust="spacingAndGlyphs">14. Oranžovočierny</text>
<text x="1258.6" y="514.94" fill="#30a646" class="l" textLength="65.5" lengthAdjust="spacingAndGlyphs">3. Zelený</text>
<text x="1353.2" y="514.94" fill="#30a646" class="l" textLength="115" lengthAdjust="spacingAndGlyphs">15. Zelenočierny</text>
<text x="1258.6" y="537.21" fill="#88604a" class="l" textLength="61" lengthAdjust="spacingAndGlyphs">4. Hnedý</text>
<text x="1353.2" y="537.21" fill="#88604a" class="l" textLength="110" lengthAdjust="spacingAndGlyphs">16. Hnedočierny</text>
<text x="1258.6" y="559.48" fill="#727272" class="l" textLength="51.5" lengthAdjust="spacingAndGlyphs">5. Šedý</text>
<text x="1353.2" y="559.48" fill="#727272" class="l" textLength="101.5" lengthAdjust="spacingAndGlyphs">17. Šedočierny</text>
<text x="1258.6" y="581.75" fill="#dedede" class="l" textLength="51.5" lengthAdjust="spacingAndGlyphs">6. Biely</text>
<text x="1353.2" y="581.75" fill="#dedede" class="l" textLength="101.5" lengthAdjust="spacingAndGlyphs">18. Bieločierny</text>
<text x="1258.6" y="604.02" fill="#aa2020" class="l" textLength="75" lengthAdjust="spacingAndGlyphs">7. Červený</text>
<text x="1353.2" y="604.02" fill="#aa2020" class="l" textLength="125" lengthAdjust="spacingAndGlyphs">19. Červenočierny</text>
<text x="1258.6" y="626.29" fill="#d6d6d6" class="l" textLength="61.5" lengthAdjust="spacingAndGlyphs">8. Čierny</text>
<text x="1353.2" y="626.29" fill="#dedede" class="l" textLength="135.5" lengthAdjust="spacingAndGlyphs">20. Transparentný</text>
<text x="1258.6" y="648.56" fill="#bebe58" class="l" textLength="47" lengthAdjust="spacingAndGlyphs">9. Žltý</text>
<text x="1353.2" y="648.56" fill="#bebe58" class="l" textLength="97" lengthAdjust="spacingAndGlyphs">21. Žltočierny</text>
<text x="1258.6" y="670.83" fill="#a434b0" class="l" textLength="73" lengthAdjust="spacingAndGlyphs">10. Fialový</text>
<text x="1353.2" y="670.83" fill="#a434b0" class="l" textLength="121" lengthAdjust="spacingAndGlyphs">22. Fialovočierny</text>
<text x="1258.6" y="693.1" fill="#ac82ac" class="l" textLength="72" lengthAdjust="spacingAndGlyphs">11. Ružový</text>
<text x="1353.2" y="693.1" fill="#ac82ac" class="l" textLength="121.5" lengthAdjust="spacingAndGlyphs">23. Ružovočierny</text>
<text x="1258.6" y="715.37" fill="#3ca2ac" class="l" textLength="59" lengthAdjust="spacingAndGlyphs">12. Aqua</text>
<text x="1353.2" y="715.37" fill="#3ca2ac" class="l" textLength="115" lengthAdjust="spacingAndGlyphs">24. Aqua-čierny</text>
<text x="1353.4" y="759.5" fill="#d8d8d8" class="l" textLength="202" lengthAdjust="spacingAndGlyphs">Splitter 1:X bez konektorov</text>
<text x="1353.4" y="815" fill="#d8d8d8" class="l" textLength="183" lengthAdjust="spacingAndGlyphs">Splitter 1:X s konektormi</text>
<text x="1353.4" y="867" fill="#d8d8d8" class="l" textLength="33" lengthAdjust="spacingAndGlyphs">Zvar</text>
<text x="1353.4" y="889.3" fill="#d8d8d8" class="l" textLength="66.5" lengthAdjust="spacingAndGlyphs">Konektor</text>
<polyline points="1259.78,772.2 1326.58,772.2 1293.18,745.2 1259.78,772.2" stroke="#d0d0d0" stroke-width="1.2" fill="none"/>
<line x1="1293.18" y1="745.2" x2="1293.18" y2="738.8" stroke="#d0d0d0" stroke-width="1.2"/>
<circle cx="1293.18" cy="738.8" r="1.25" fill="#ececec"/>
<line x1="1287.61" y1="766.63" x2="1287.61" y2="777.77" stroke="#d0d0d0" stroke-width="1.2"/>
<circle cx="1287.61" cy="777.77" r="1.25" fill="#e4e4e4"/>
<line x1="1298.74" y1="766.63" x2="1298.74" y2="777.77" stroke="#d0d0d0" stroke-width="1.2"/>
<circle cx="1298.74" cy="777.77" r="1.25" fill="#e4e4e4"/>
<line x1="1282.04" y1="766.63" x2="1282.04" y2="777.77" stroke="#d0d0d0" stroke-width="1.2"/>
<circle cx="1282.04" cy="777.77" r="1.25" fill="#e4e4e4"/>
<line x1="1304.31" y1="766.63" x2="1304.31" y2="777.77" stroke="#d0d0d0" stroke-width="1.2"/>
<circle cx="1304.31" cy="777.77" r="1.25" fill="#e4e4e4"/>
<line x1="1276.48" y1="766.63" x2="1276.48" y2="777.77" stroke="#d0d0d0" stroke-width="1.2"/>
<circle cx="1276.48" cy="777.77" r="1.25" fill="#e4e4e4"/>
<line x1="1309.88" y1="766.63" x2="1309.88" y2="777.77" stroke="#d0d0d0" stroke-width="1.2"/>
<circle cx="1309.88" cy="777.77" r="1.25" fill="#e4e4e4"/>
<line x1="1270.91" y1="766.63" x2="1270.91" y2="777.77" stroke="#d0d0d0" stroke-width="1.2"/>
<circle cx="1270.91" cy="777.77" r="1.25" fill="#e4e4e4"/>
<line x1="1315.44" y1="766.63" x2="1315.44" y2="777.77" stroke="#d0d0d0" stroke-width="1.2"/>
<circle cx="1315.44" cy="777.77" r="1.25" fill="#e4e4e4"/>
<text x="1293.18" y="758.73" font-size="8.6" fill="#e4e4e4" text-anchor="middle" textLength="11" lengthAdjust="spacingAndGlyphs">1x8</text>
<polyline points="1259.78,827.87 1326.58,827.87 1293.18,800.87 1259.78,827.87" stroke="#d0d0d0" stroke-width="1.2" fill="none"/>
<line x1="1293.18" y1="800.87" x2="1293.18" y2="794.47" stroke="#d0d0d0" stroke-width="1.2"/>
<circle cx="1293.18" cy="794.47" r="1.25" fill="#ececec"/>
<line x1="1287.61" y1="822.3" x2="1287.61" y2="829.54" stroke="#d0d0d0" stroke-width="1.2"/>
<rect x="1286.38" y="829.26" width="2.45" height="4.17" stroke="#e0e0e0" stroke-width="1" fill="none"/>
<line x1="1298.74" y1="822.3" x2="1298.74" y2="829.54" stroke="#d0d0d0" stroke-width="1.2"/>
<rect x="1297.52" y="829.26" width="2.45" height="4.17" stroke="#e0e0e0" stroke-width="1" fill="none"/>
<line x1="1282.04" y1="822.3" x2="1282.04" y2="829.54" stroke="#d0d0d0" stroke-width="1.2"/>
<rect x="1280.82" y="829.26" width="2.45" height="4.17" stroke="#e0e0e0" stroke-width="1" fill="none"/>
<line x1="1304.31" y1="822.3" x2="1304.31" y2="829.54" stroke="#d0d0d0" stroke-width="1.2"/>
<rect x="1303.09" y="829.26" width="2.45" height="4.17" stroke="#e0e0e0" stroke-width="1" fill="none"/>
<line x1="1276.48" y1="822.3" x2="1276.48" y2="829.54" stroke="#d0d0d0" stroke-width="1.2"/>
<rect x="1275.25" y="829.26" width="2.45" height="4.17" stroke="#e0e0e0" stroke-width="1" fill="none"/>
<line x1="1309.88" y1="822.3" x2="1309.88" y2="829.54" stroke="#d0d0d0" stroke-width="1.2"/>
<rect x="1308.65" y="829.26" width="2.45" height="4.17" stroke="#e0e0e0" stroke-width="1" fill="none"/>
<line x1="1270.91" y1="822.3" x2="1270.91" y2="829.54" stroke="#d0d0d0" stroke-width="1.2"/>
<rect x="1269.68" y="829.26" width="2.45" height="4.17" stroke="#e0e0e0" stroke-width="1" fill="none"/>
<line x1="1315.44" y1="822.3" x2="1315.44" y2="829.54" stroke="#d0d0d0" stroke-width="1.2"/>
<rect x="1314.22" y="829.26" width="2.45" height="4.17" stroke="#e0e0e0" stroke-width="1" fill="none"/>
<text x="1293.18" y="814.4" font-size="8.6" fill="#e4e4e4" text-anchor="middle" textLength="11" lengthAdjust="spacingAndGlyphs">1x8</text>
<line x1="1289.72" y1="857.82" x2="1296.63" y2="864.72" stroke="#d0d0d0" stroke-width="1"/>
<line x1="1289.72" y1="864.72" x2="1296.63" y2="857.82" stroke="#d0d0d0" stroke-width="1"/>
<rect x="1290.39" y="877.97" width="5.57" height="11.13" stroke="#d2d2d2" stroke-width="1.3" fill="none"/>
<line x1="1290.39" y1="877.97" x2="1295.96" y2="889.1" stroke="#d2d2d2" stroke-width="0.9"/>
<line x1="1290.39" y1="889.1" x2="1295.96" y2="877.97" stroke="#d2d2d2" stroke-width="0.9"/>
</g>
<g>
<rect x="13.7" y="9.4" width="1653.2" height="1169.1" fill="none" stroke="#ae36ae" stroke-width="2.7"/>
<rect x="41.4" y="37.4" width="1603.2" height="1118.9" fill="none" stroke="#fff" stroke-width="3"/>
<line x1="442.2" y1="37.4" x2="442.2" y2="1156.3" stroke="#ffffff" stroke-width="2.6"/>
<line x1="843" y1="37.4" x2="843" y2="1156.3" stroke="#ffffff" stroke-width="2.6"/>
<line x1="1243.8" y1="37.4" x2="1243.8" y2="1156.3" stroke="#ffffff" stroke-width="2.6"/>
<line x1="41.4" y1="410.37" x2="1644.6" y2="410.37" stroke="#ffffff" stroke-width="2.6"/>
<line x1="41.4" y1="783.33" x2="1243.8" y2="783.33" stroke="#ffffff" stroke-width="2.6"/>
<line x1="1243.8" y1="978.17" x2="1644.6" y2="978.17" stroke="#ffffff" stroke-width="2.5"/>
<line x1="1243.8" y1="1067.23" x2="1644.6" y2="1067.23" stroke="#ffffff" stroke-width="2.5"/>
<line x1="1243.8" y1="1111.77" x2="1466.47" y2="1111.77" stroke="#ffffff" stroke-width="2.4"/>
<line x1="1466.47" y1="1067.23" x2="1466.47" y2="1156.3" stroke="#ffffff" stroke-width="2.5"/>
<line x1="1377.9" y1="1111.77" x2="1377.9" y2="1156.3" stroke="#ffffff" stroke-width="2.4"/>
</g>
<g>
<text x="1247" y="1000.7" class="k" textLength="48" lengthAdjust="spacingAndGlyphs">Názov:</text>
<text x="1247" y="1090" class="k" textLength="49.5" lengthAdjust="spacingAndGlyphs">Dátum:</text>
<text x="1247.4" y="1132.9" class="k" textLength="54" lengthAdjust="spacingAndGlyphs">Strany:</text>
<text x="1381.8" y="1132.9" class="k" textLength="30.5" lengthAdjust="spacingAndGlyphs">Ver:</text>
<text x="1471" y="1087.7" class="k" textLength="63" lengthAdjust="spacingAndGlyphs">Vytvoril:</text>
<text x="1314" y="1012.3" class="v">Rajec FTTx</text>
<text x="1315" y="1047.5" class="v">Skupina Boxov 2</text>
<text x="1305.4" y="1101.3" class="v">2026-01-19</text>
<text x="1314" y="1143.8" class="v">4/7</text>
<text x="1422.2" y="1143.8" class="v">1</text>
<text x="1499.5" y="1128.8" class="v">R. Švaňa</text>
</g>
</svg>
</body></html>
